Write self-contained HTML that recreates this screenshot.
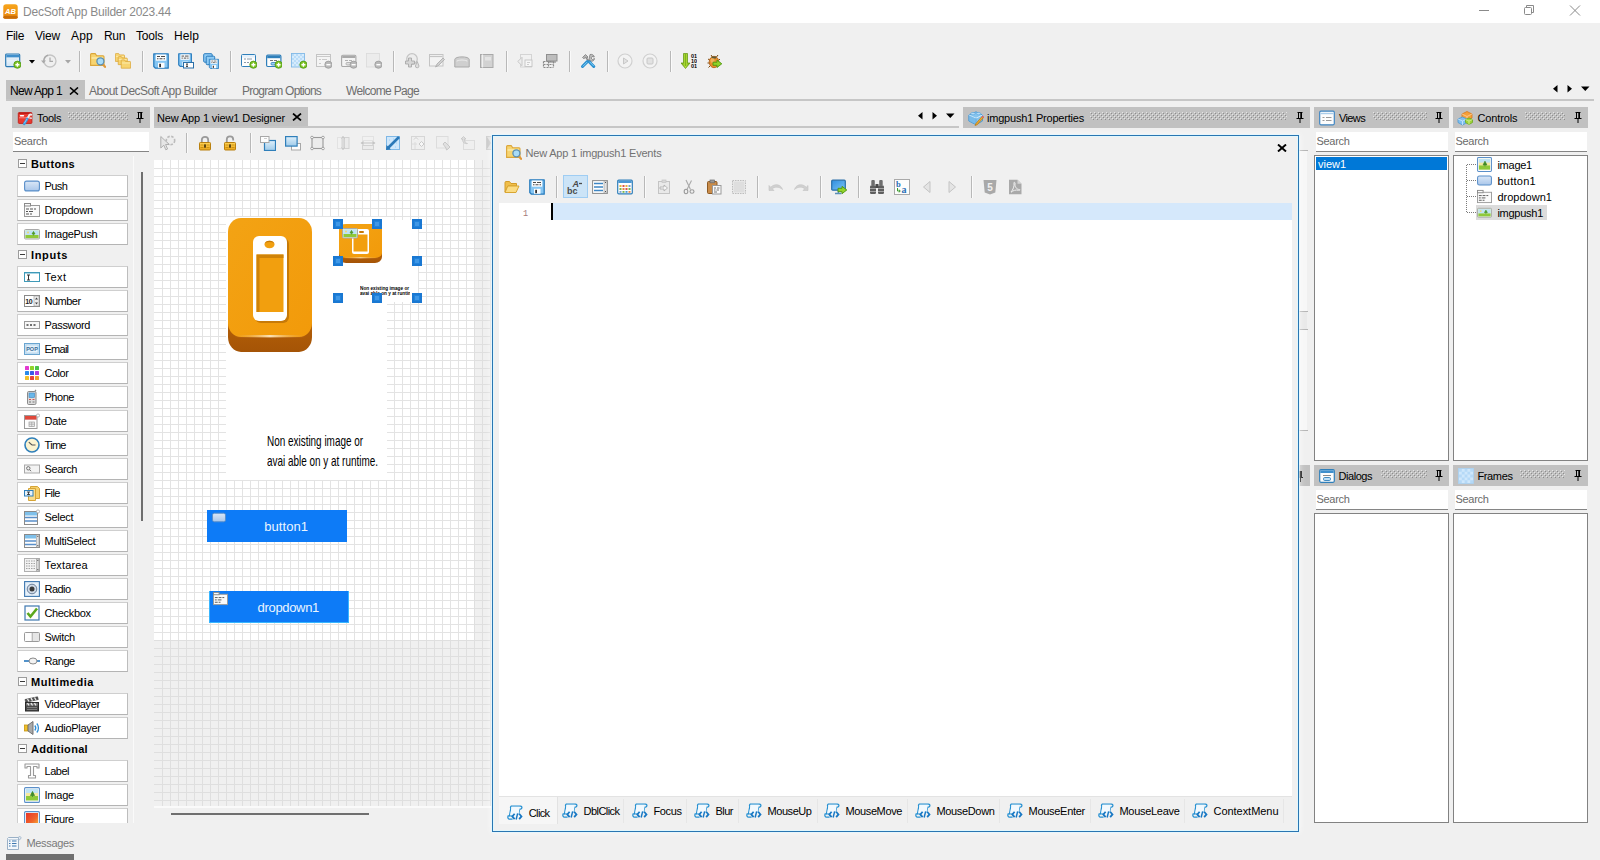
<!DOCTYPE html>
<html lang="en"><head><meta charset="utf-8"><title>DecSoft App Builder 2023.44</title>
<style>
html,body{margin:0;padding:0}
body{width:1600px;height:860px;overflow:hidden;background:#f0f0f0;position:relative;font-family:"Liberation Sans",sans-serif;}
#r{position:absolute;left:0;top:0;width:1600px;height:860px;overflow:hidden}
#r div,#r span.t,#r svg.i{position:absolute}
#r div{box-sizing:border-box}
span.t{white-space:pre}
</style></head>
<body><div id="r">
<svg width="0" height="0" style="position:absolute"><defs><linearGradient id="apg" x1="0" y1="0" x2="0" y2="1"><stop offset="0" stop-color="#f7a51c"/><stop offset="1" stop-color="#e8860c"/></linearGradient><linearGradient id="nag" x1="0" y1="0" x2="0" y2="1"><stop offset="0" stop-color="#fff"/><stop offset="1" stop-color="#cfe4f5"/></linearGradient><linearGradient id="dlg" x1="0" y1="0" x2="1" y2="0"><stop offset="0" stop-color="#6aa80f"/><stop offset=".5" stop-color="#b7e23a"/><stop offset="1" stop-color="#6aa80f"/></linearGradient><linearGradient id="pbg" x1="0" y1="0" x2="0" y2="1"><stop offset="0" stop-color="#dbe8f7"/><stop offset="1" stop-color="#a9c6ea"/></linearGradient><linearGradient id="fgg" x1="0" y1="0" x2="1" y2="1"><stop offset="0" stop-color="#e8352a"/><stop offset=".6" stop-color="#f0642a"/><stop offset="1" stop-color="#f5b03a"/></linearGradient><linearGradient id="lkg" x1="0" y1="0" x2="0" y2="1"><stop offset="0" stop-color="#ffd55a"/><stop offset="1" stop-color="#e9a318"/></linearGradient><linearGradient id="sqb" x1="0" y1="0" x2="0" y2="1"><stop offset="0" stop-color="#dff0fb"/><stop offset="1" stop-color="#9fcbea"/></linearGradient><linearGradient id="mng" x1="0" y1="0" x2="1" y2="1"><stop offset="0" stop-color="#2f8ee0"/><stop offset="1" stop-color="#7cc4f4"/></linearGradient></defs></svg>
<div style="left:0px;top:0px;width:1600px;height:23px;background:#fff"></div>
<svg class="i" style="left:3px;top:4px;" width="15" height="15" viewBox="0 0 16 16"><rect x=".3" y=".3" width="15.400" height="15.400" rx="3" fill="url(#apg)"/><rect x=".3" y="12.500" width="15.400" height="3.200" rx="2" fill="#c96d08"/><text x="8" y="10.800" font-size="8" font-weight="bold" font-style="italic" text-anchor="middle" fill="#fff" font-family="Liberation Sans, sans-serif">AB</text></svg>
<span class="t" style="left:23px;top:5.84px;font-size:12px;line-height:12px;color:#8a8a8a;letter-spacing:-0.227px;">DecSoft App Builder 2023.44</span>
<svg class="i" style="left:1470px;top:0" width="130" height="23" viewBox="0 0 130 23"><g stroke="#8a8a8a" stroke-width="1" fill="none"><path d="M9 10.5H19"/><rect x="54.5" y="7.5" width="7" height="7" rx="1"/><path d="M56.5 7.5V5.5H63.5V12.5H61.5"/><path d="M100 5.5L110 15.5M110 5.5L100 15.5"/></g></svg>
<span class="t" style="left:6px;top:29.84px;font-size:12px;line-height:12px;color:#000;letter-spacing:-0.334px;">File</span>
<span class="t" style="left:35px;top:29.84px;font-size:12px;line-height:12px;color:#000;letter-spacing:-0.199px;">View</span>
<span class="t" style="left:71px;top:29.84px;font-size:12px;line-height:12px;color:#000;letter-spacing:0.216px;">App</span>
<span class="t" style="left:104px;top:29.84px;font-size:12px;line-height:12px;color:#000;letter-spacing:-0.338px;">Run</span>
<span class="t" style="left:136px;top:29.84px;font-size:12px;line-height:12px;color:#000;letter-spacing:-0.203px;">Tools</span>
<span class="t" style="left:174px;top:29.84px;font-size:12px;line-height:12px;color:#000;letter-spacing:0.080px;">Help</span>
<svg class="i" style="left:5px;top:53px;" width="16" height="16" viewBox="0 0 16 16"><rect x=".7" y="1" width="14" height="12.600" rx="1" fill="url(#nag)" stroke="#2c7ab3" stroke-width="1.200"/><rect x="1.300" y="1.600" width="12.800" height="2.800" fill="#3f8fcc"/><path d="M1.500 6H14" stroke="#c9dceb" stroke-width=".7"/><circle cx="12.4" cy="11.7" r="3.6" fill="#7ec225" stroke="#4e9a12" stroke-width=".8"/><path d="M10.4 11.7H14.4M12.4 9.7V13.7" stroke="#fff" stroke-width="1.4"/></svg>
<svg class="i" style="left:41px;top:53px;" width="16" height="16" viewBox="0 0 16 16"><circle cx="9" cy="8" r="6" fill="#efefef" stroke="#c4c4c4" stroke-width="1.300"/><path d="M9 4.500V8.300H12" stroke="#a9a9a9" stroke-width="1.200" fill="none"/><path d="M0 7.500L2.500 10.500L5 7.500Z" fill="#a9a9a9"/><path d="M2.700 8A6.300 6.300 0 0 1 7 2.200" stroke="#a9a9a9" stroke-width="1.300" fill="none"/></svg>
<svg class="i" style="left:90px;top:53px;" width="16" height="16" viewBox="0 0 16 16"><g transform="translate(0 0) scale(1.0)"><path d="M.600 1.600C.600 1 1 .600 1.600 .600H5.200L6.700 2.800H13C13.600 2.800 14 3.200 14 3.800V12.400H.600Z" fill="#f7d470" stroke="#dba63a" stroke-width="1.100" stroke-linejoin="round"/><path d="M1.500 5H13.200" stroke="#fceeb5" stroke-width="1.200"/></g><path d="M12.600 11L15 13.800" stroke="#e09a3a" stroke-width="2.200" stroke-linecap="round"/><circle cx="10.400" cy="8.300" r="3.500" fill="#a9dcf7" stroke="#5b8fb3" stroke-width="1.300"/></svg>
<svg class="i" style="left:115px;top:53px;" width="16" height="16" viewBox="0 0 16 16"><g transform="translate(0 0) scale(0.68)"><path d="M.600 1.600C.600 1 1 .600 1.600 .600H5.200L6.700 2.800H13C13.600 2.800 14 3.200 14 3.800V12.400H.600Z" fill="#f7d470" stroke="#dba63a" stroke-width="1.100" stroke-linejoin="round"/><path d="M1.500 5H13.200" stroke="#fceeb5" stroke-width="1.200"/></g><g transform="translate(2.8 3.2) scale(0.68)"><path d="M.600 1.600C.600 1 1 .600 1.600 .600H5.200L6.700 2.800H13C13.600 2.800 14 3.200 14 3.800V12.400H.600Z" fill="#f7d470" stroke="#dba63a" stroke-width="1.100" stroke-linejoin="round"/><path d="M1.500 5H13.200" stroke="#fceeb5" stroke-width="1.200"/></g><g transform="translate(5.8 6.5) scale(0.7)"><path d="M.600 1.600C.600 1 1 .600 1.600 .600H5.200L6.700 2.800H13C13.600 2.800 14 3.200 14 3.800V12.400H.600Z" fill="#f7d470" stroke="#dba63a" stroke-width="1.100" stroke-linejoin="round"/><path d="M1.500 5H13.200" stroke="#fceeb5" stroke-width="1.200"/></g></svg>
<svg class="i" style="left:153px;top:53px;" width="16" height="16" viewBox="0 0 16 16"><g transform="translate(0 0) scale(1.0)"><path d="M.8 .8H15.200V15.200H2.500L.8 13.500Z" fill="#86c6f3" stroke="#2a7cbd" stroke-width="1.300" stroke-linejoin="round"/><rect x="2.800" y="1.500" width="10.400" height="6.200" fill="#fdfdfd"/><path d="M4 3.500H7M8 3.500H12M4 5.800H5.500M6.500 5.800H9.500M10.500 5.800H12" stroke="#4a4a4a" stroke-width="1.100"/><rect x="5" y="9.800" width="6.500" height="5" fill="#fdfdfd"/><rect x="6.200" y="10.800" width="1.800" height="3.400" fill="#333"/></g></svg>
<svg class="i" style="left:178px;top:53px;" width="16" height="16" viewBox="0 0 16 16"><g transform="translate(0 0) scale(0.88)"><path d="M.8 .8H15.200V15.200H2.500L.8 13.500Z" fill="#86c6f3" stroke="#2a7cbd" stroke-width="1.300" stroke-linejoin="round"/><rect x="2.800" y="1.500" width="10.400" height="6.200" fill="#fdfdfd"/><path d="M4 3.500H7M8 3.500H12M4 5.800H5.500M6.500 5.800H9.500M10.500 5.800H12" stroke="#4a4a4a" stroke-width="1.100"/><rect x="5" y="9.800" width="6.500" height="5" fill="#fdfdfd"/><rect x="6.200" y="10.800" width="1.800" height="3.400" fill="#333"/></g><rect x="5.500" y="9.500" width="10" height="5.500" fill="#fdfdfd" stroke="#2a6fa8"/><path d="M8 11H10M9 11V13.500M8 13.500H10" stroke="#222" stroke-width=".8"/></svg>
<svg class="i" style="left:203px;top:53px;" width="16" height="16" viewBox="0 0 16 16"><rect x=".7" y=".7" width="8.500" height="8.500" rx="1" fill="#8ecbf5" stroke="#2a7cbd"/><rect x="3.200" y="3.200" width="8.500" height="8.500" rx="1" fill="#8ecbf5" stroke="#2a7cbd"/><g transform="translate(5.8 5.8) scale(0.64)"><path d="M.8 .8H15.200V15.200H2.500L.8 13.500Z" fill="#86c6f3" stroke="#2a7cbd" stroke-width="1.300" stroke-linejoin="round"/><rect x="2.800" y="1.500" width="10.400" height="6.200" fill="#fdfdfd"/><path d="M4 3.500H7M8 3.500H12M4 5.800H5.500M6.500 5.800H9.500M10.500 5.800H12" stroke="#4a4a4a" stroke-width="1.100"/><rect x="5" y="9.800" width="6.500" height="5" fill="#fdfdfd"/><rect x="6.200" y="10.800" width="1.800" height="3.400" fill="#333"/></g></svg>
<svg class="i" style="left:241px;top:53px;" width="16" height="16" viewBox="0 0 16 16"><rect x=".5" y="1.5" width="14" height="12" rx="1" fill="#fdfdfd" stroke="#2f7fba"/><rect x="1" y="2" width="13" height="2.500" fill="#e4f0fa"/><path d="M3 6H5M6 6H11M3 9.500H5M6 9.500H8" stroke="#8a9aaa" stroke-width="1"/><circle cx="12.4" cy="11.7" r="3.6" fill="#7ec225" stroke="#4e9a12" stroke-width=".8"/><path d="M10.4 11.7H14.4M12.4 9.7V13.7" stroke="#fff" stroke-width="1.4"/></svg>
<svg class="i" style="left:266px;top:53px;" width="16" height="16" viewBox="0 0 16 16"><rect x=".6" y="2.200" width="14.300" height="11.300" rx="1.200" fill="#fdfdfd" stroke="#2f7fba" stroke-width="1.200"/><rect x="1.200" y="2.800" width="13.100" height="2.400" fill="#2f7fba"/><path d="M4 7.500H7M8 7.500H11" stroke="#666" stroke-width=".9"/><rect x="5" y="9.500" width="6" height="2.500" rx="1" fill="#9fd0f5" stroke="#2f7fba" stroke-width=".8"/><circle cx="12.6" cy="11.7" r="3.6" fill="#7ec225" stroke="#4e9a12" stroke-width=".8"/><path d="M10.6 11.7H14.6M12.6 9.7V13.7" stroke="#fff" stroke-width="1.4"/></svg>
<svg class="i" style="left:291px;top:53px;" width="16" height="16" viewBox="0 0 16 16"><rect x=".5" y=".5" width="13" height="13.500" fill="#d6ebfc" stroke="#7fb8e6" stroke-width=".9"/><path d="M1 1h2v2h-2zM5 1h2v2h-2zM9 1h2v2h-2zM3 3h2v2h-2zM7 3h2v2h-2zM11 3h2v2h-2zM1 5h2v2h-2zM5 5h2v2h-2zM9 5h2v2h-2zM3 7h2v2h-2zM7 7h2v2h-2zM11 7h2v2h-2zM1 9h2v2h-2zM5 9h2v2h-2zM9 9h2v2h-2zM3 11h2v2h-2zM7 11h2v2h-2zM11 11h2v2h-2z" fill="#b9dcf8"/><circle cx="12.4" cy="11.7" r="3.6" fill="#7ec225" stroke="#4e9a12" stroke-width=".8"/><path d="M10.4 11.7H14.4M12.4 9.7V13.7" stroke="#fff" stroke-width="1.4"/></svg>
<svg class="i" style="left:316px;top:53px;" width="16" height="16" viewBox="0 0 16 16"><rect x=".5" y="1.500" width="14" height="12" fill="#f4f4f4" stroke="#c4c4c4"/><path d="M1 3.500H14M3 6.500H5M6 6.500H11M3 10.500H5" stroke="#c4c4c4" stroke-width=".9"/><circle cx="12.4" cy="11.7" r="3.6" fill="#b9b9b9" stroke="#9a9a9a" stroke-width=".8"/><path d="M10.4 11.7H14.4" stroke="#fff" stroke-width="1.4"/></svg>
<svg class="i" style="left:341px;top:53px;" width="16" height="16" viewBox="0 0 16 16"><rect x=".6" y="2.200" width="14.300" height="11.300" rx="1.200" fill="#f4f4f4" stroke="#a9a9a9" stroke-width="1.100"/><rect x="1.200" y="2.800" width="13.100" height="2.200" fill="#a9a9a9"/><path d="M4 7.500H7M8 7.500H11" stroke="#a9a9a9" stroke-width=".9"/><rect x="5" y="9.500" width="6" height="2.500" rx="1" fill="#e0e0e0" stroke="#a9a9a9" stroke-width=".8"/><circle cx="12.6" cy="11.7" r="3.6" fill="#b9b9b9" stroke="#9a9a9a" stroke-width=".8"/><path d="M10.6 11.7H14.6" stroke="#fff" stroke-width="1.4"/></svg>
<svg class="i" style="left:366px;top:53px;" width="16" height="16" viewBox="0 0 16 16"><rect x=".5" y=".5" width="13" height="13.500" fill="#ececec" stroke="#dadada" stroke-width=".8"/><circle cx="12.4" cy="11.7" r="3.6" fill="#b9b9b9" stroke="#9a9a9a" stroke-width=".8"/><path d="M10.4 11.7H14.4" stroke="#fff" stroke-width="1.4"/></svg>
<svg class="i" style="left:404px;top:53px;" width="16" height="16" viewBox="0 0 16 16"><circle cx="8" cy="6" r="5.300" fill="#ededed" stroke="#c4c4c4" stroke-width="1.200"/><path d="M4.500 5V8H1.500V11H4.500V14H7.500V11H10.500V8H7.500V5Z" fill="#d6d6d6" stroke="#a9a9a9" stroke-width=".9"/><path d="M13.200 8.500L15 13A1.800 1.800 0 0 1 11.400 13Z" fill="#e0e0e0" stroke="#a9a9a9" stroke-width=".8"/></svg>
<svg class="i" style="left:429px;top:53px;" width="16" height="16" viewBox="0 0 16 16"><rect x=".5" y="1.500" width="13.500" height="11.500" fill="#f3f3f3" stroke="#c4c4c4"/><path d="M1 3.500H13.500" stroke="#c4c4c4" stroke-width="1.200"/><path d="M6.500 14L8 11L14 5L15.500 6.500L9.500 12.500Z" fill="#d0d0d0" stroke="#a9a9a9" stroke-width=".8"/></svg>
<svg class="i" style="left:454px;top:53px;" width="16" height="16" viewBox="0 0 16 16"><path d="M.8 14V6.500C.8 3 15.200 3 15.200 6.500V14Z" fill="#cfcfcf" stroke="#a9a9a9" stroke-width="1"/><path d="M3 8.500C3 6.500 13 6.500 13 8.500" stroke="#eaeaea" stroke-width="1.200" fill="none"/></svg>
<svg class="i" style="left:479px;top:53px;" width="16" height="16" viewBox="0 0 16 16"><rect x="1.500" y="1.500" width="12.500" height="13" fill="#d2d2d2" stroke="#a9a9a9"/><path d="M3.500 1.500V14.500" stroke="#f0f0f0" stroke-width="1.200"/><rect x="6" y="4" width="6" height="3.500" fill="#e4e4e4"/></svg>
<svg class="i" style="left:517px;top:53px;" width="16" height="16" viewBox="0 0 16 16"><rect x="3.500" y="1.500" width="11" height="12.500" fill="#f1f1f1" stroke="#d4d4d4"/><path d="M.8 8.500L5 4.300V12.700Z" fill="#ededed" stroke="#c4c4c4" stroke-width=".9"/><rect x="8" y="7" width="7" height="6.500" fill="#f6f6f6" stroke="#c4c4c4" stroke-width=".9"/><path d="M10 9.500H13M10 11.500H12" stroke="#c4c4c4" stroke-width=".8"/></svg>
<svg class="i" style="left:542px;top:53px;" width="16" height="16" viewBox="0 0 16 16"><rect x="4.500" y="1.500" width="10.500" height="6.500" fill="#bdbdbd" stroke="#8f8f8f"/><path d="M6 9H14" stroke="#8f8f8f" stroke-width="1.200"/><g stroke="#8a8a8a" stroke-width="1.200" fill="none" stroke-dasharray="2 1"><path d="M1.500 8.500H11.500M1.500 11.500H11.500M1.500 14.500H11.500M1.500 8.500V14.500M6.500 8.500V14.500M11.500 8.500V14.500"/></g></svg>
<svg class="i" style="left:580px;top:53px;" width="16" height="16" viewBox="0 0 16 16"><path d="M2.500 4.500L5.500 1.500L8 4L6.800 5.200L5.800 4.200L5 5L3.500 5.500Z" fill="#b5b5b5" stroke="#7d7d7d" stroke-width=".8"/><path d="M10 1.500C12 1 14 2 14.300 4L12 3.500L11 5L12.500 6.500L14.500 5.500C14.500 7.500 12.500 8.800 10.500 8L9 6.500Z" fill="#bdbdbd" stroke="#7d7d7d" stroke-width=".8"/><path d="M6 5L10.500 9.500" stroke="#8a8a8a" stroke-width="1.600"/><path d="M9.800 6.800L7.500 9" stroke="#8a8a8a" stroke-width="1.600"/><path d="M7.300 8.600L2.500 13.500" stroke="#2a8fd0" stroke-width="3" stroke-linecap="round"/><path d="M9.200 8.800L13.800 13.500" stroke="#2a8fd0" stroke-width="3" stroke-linecap="round"/><path d="M7 9.200L3 13.200" stroke="#7fd0f5" stroke-width="1" stroke-linecap="round"/><path d="M9.800 9L13.500 12.800" stroke="#7fd0f5" stroke-width="1" stroke-linecap="round"/></svg>
<svg class="i" style="left:617px;top:53px;" width="16" height="16" viewBox="0 0 16 16"><circle cx="8" cy="8" r="7" fill="#f3f3f3" stroke="#d0d0d0" stroke-width="1.200"/><path d="M6.500 5V11L11 8Z" fill="#e2e2e2" stroke="#c4c4c4" stroke-width=".9"/></svg>
<svg class="i" style="left:642px;top:53px;" width="16" height="16" viewBox="0 0 16 16"><circle cx="8" cy="8" r="7" fill="#f3f3f3" stroke="#d0d0d0" stroke-width="1.200"/><rect x="5" y="5" width="6" height="6" rx="1" fill="#e2e2e2" stroke="#c4c4c4" stroke-width=".9"/></svg>
<svg class="i" style="left:681px;top:53px;" width="16" height="16" viewBox="0 0 16 16"><path d="M2.500 .5H6.500V10H9L4.500 15.500L0 10H2.500Z" fill="url(#dlg)" stroke="#5c940c" stroke-width=".7"/><path d="M4.500 1V13" stroke="#5c940c" stroke-width=".6"/><g font-family="Liberation Sans, sans-serif" font-size="5.500" font-weight="bold" fill="#000"><text x="10" y="4.800">01</text><text x="10" y="9.800">10</text><text x="10" y="14.800">01</text></g></svg>
<svg class="i" style="left:706px;top:53px;" width="16" height="16" viewBox="0 0 16 16"><path d="M5 2L6.500 4M12 2L10.500 4M2 6L4.500 7.500M1.500 10H4M2.500 14.500L4.500 12.500M14 6L12.500 7.500" stroke="#7a4a10" stroke-width="1"/><ellipse cx="8" cy="9" rx="4.800" ry="5.700" fill="#e8902a" stroke="#b4631a" stroke-width=".9"/><path d="M5.500 3.500H10.500L10 5.500H6Z" fill="#5a5a3a"/><ellipse cx="6.500" cy="7.500" rx="2" ry="2.500" fill="#f5c070" opacity=".7"/><path d="M7 9.200H11V7L15.800 10.800L11 14.500V12.300H7Z" fill="#8fd32a" stroke="#4f9510" stroke-width=".9" stroke-linejoin="round"/></svg>
<div style="left:79px;top:51px;width:1px;height:21px;background:#b8b8b8"></div>
<div style="left:80px;top:51px;width:1px;height:21px;background:#fafafa"></div>
<div style="left:142px;top:51px;width:1px;height:21px;background:#b8b8b8"></div>
<div style="left:143px;top:51px;width:1px;height:21px;background:#fafafa"></div>
<div style="left:230px;top:51px;width:1px;height:21px;background:#b8b8b8"></div>
<div style="left:231px;top:51px;width:1px;height:21px;background:#fafafa"></div>
<div style="left:393px;top:51px;width:1px;height:21px;background:#b8b8b8"></div>
<div style="left:394px;top:51px;width:1px;height:21px;background:#fafafa"></div>
<div style="left:506px;top:51px;width:1px;height:21px;background:#b8b8b8"></div>
<div style="left:507px;top:51px;width:1px;height:21px;background:#fafafa"></div>
<div style="left:569px;top:51px;width:1px;height:21px;background:#b8b8b8"></div>
<div style="left:570px;top:51px;width:1px;height:21px;background:#fafafa"></div>
<div style="left:607px;top:51px;width:1px;height:21px;background:#b8b8b8"></div>
<div style="left:608px;top:51px;width:1px;height:21px;background:#fafafa"></div>
<div style="left:670px;top:51px;width:1px;height:21px;background:#b8b8b8"></div>
<div style="left:671px;top:51px;width:1px;height:21px;background:#fafafa"></div>
<svg class="i" style="left:28.500px;top:60px" width="6" height="3.500" viewBox="0 0 6 3.500"><path d="M0 0H6L3 3.500Z" fill="#000"/></svg>
<svg class="i" style="left:64.500px;top:60px" width="6" height="3.500" viewBox="0 0 6 3.500"><path d="M0 0H6L3 3.500Z" fill="#a6a6a6"/></svg>
<div style="left:6px;top:80px;width:79px;height:21px;background:#c1c1c1"></div>
<span class="t" style="left:10px;top:84.84px;font-size:12px;line-height:12px;color:#000;letter-spacing:-0.671px;">New App 1</span>
<svg class="i" style="left:69.400px;top:86.700px" width="10" height="8" viewBox="0 0 10 8"><path d="M1 .5L9 7.500M9 .5L1 7.500" stroke="#000" stroke-width="1.600"/></svg>
<span class="t" style="left:89px;top:84.84px;font-size:12px;line-height:12px;color:#6e6e6e;letter-spacing:-0.564px;">About DecSoft App Builder</span>
<span class="t" style="left:242px;top:84.84px;font-size:12px;line-height:12px;color:#6e6e6e;letter-spacing:-0.780px;">Program Options</span>
<span class="t" style="left:346px;top:84.84px;font-size:12px;line-height:12px;color:#6e6e6e;letter-spacing:-0.680px;">Welcome Page</span>
<div style="left:6px;top:99px;width:1588px;height:2px;background:#c6c6c6"></div>
<svg class="i" style="left:1553px;top:85px" width="40" height="8" viewBox="0 0 40 8"><path d="M4.500 0V7.500L0 3.750Z M14.500 0V7.500L19 3.750Z M28 1.500H36.500L32.250 6Z" fill="#000"/></svg>
<svg width="0" height="0" style="position:absolute"><defs><pattern id="gp" width="4" height="4" patternUnits="userSpaceOnUse"><rect x="0" y="0" width="1" height="1" fill="#e4e4e4"/><rect x="2" y="2" width="1" height="1" fill="#e4e4e4"/><rect x="1" y="1" width="1" height="1" fill="#8e8e8e"/><rect x="3" y="3" width="1" height="1" fill="#8e8e8e"/></pattern></defs></svg>
<div style="left:12px;top:107px;width:138px;height:21px;background:#c1c1c1"></div>
<svg class="i" style="left:17px;top:110px;" width="16" height="16" viewBox="0 0 16 16"><rect x="1.300" y="2.600" width="13.600" height="10.800" rx=".8" fill="#ea3a30" stroke="#c2201a" stroke-width=".9"/><path d="M1.800 3.300H14.400" stroke="#b81a14" stroke-width="1.200"/><path d="M2 7.800H14.400" stroke="#ff8d84" stroke-width=".9"/><path d="M3.500 5.800H6.500" stroke="#fff" stroke-width="1.400" stroke-linecap="round"/><path d="M14.800 5.200C13.500 4 11.800 4.600 11.800 6.400L10 8.600" stroke="#ececec" stroke-width="2" fill="none"/><path d="M12.500 8.200H15" stroke="#e0e0e0" stroke-width="1.300"/><path d="M10.200 8.800L7.200 13.800" stroke="#3a9be0" stroke-width="2.600" stroke-linecap="round"/><path d="M9.800 9.300L7.500 13" stroke="#9fd6f7" stroke-width=".8" stroke-linecap="round"/></svg>
<span class="t" style="left:37px;top:112.69px;font-size:11px;line-height:11px;color:#000;letter-spacing:-0.296px;">Tools</span>
<svg class="i" style="left:68px;top:112px" width="60" height="8" viewBox="0 0 60 8"><rect width="60" height="8" fill="url(#gp)"/></svg>
<svg class="i" style="left:136px;top:112px" width="8" height="11" viewBox="0 0 8 11"><path d="M1.5 0.5H6.5M2.5 0.5V6M5.5 0.5V6M4.8 0.5V6M0.5 6.5H7.5M4 6.5V11" stroke="#000" stroke-width="1" fill="none"/></svg>
<div style="left:13px;top:132px;width:136px;height:20px;background:#fff;border-bottom:1px solid #858585"></div>
<span class="t" style="left:14px;top:135.69px;font-size:11px;line-height:11px;color:#6a6a6a;letter-spacing:-0.309px;">Search</span>
<div style="left:133px;top:156px;width:1px;height:667px;background:#fafafa"></div>
<svg class="i" style="left:18px;top:159px" width="9" height="9" viewBox="0 0 9 9"><rect x=".5" y=".5" width="8" height="8" fill="#fdfdfd" stroke="#9c9c9c"/><path d="M2 4.5H7" stroke="#3a3a3a"/></svg>
<span class="t" style="left:31px;top:158.69px;font-size:11px;line-height:11px;color:#000;letter-spacing:0.350px;font-weight:bold;">Buttons</span>
<div style="left:17px;top:175px;width:111px;height:22px;background:#fff;border:1px solid #cfcfcf;border-bottom-color:#b4b4b4;border-right-color:#bdbdbd"></div>
<svg class="i" style="left:24px;top:178px;" width="16" height="16" viewBox="0 0 16 16"><rect x=".6" y="3.100" width="14.800" height="9.800" rx="2" fill="url(#pbg)" stroke="#5a8fc9" stroke-width="1.100"/></svg>
<span class="t" style="left:44.5px;top:180.69px;font-size:11px;line-height:11px;color:#000;letter-spacing:-0.593px;">Push</span>
<div style="left:17px;top:199px;width:111px;height:22px;background:#fff;border:1px solid #cfcfcf;border-bottom-color:#b4b4b4;border-right-color:#bdbdbd"></div>
<svg class="i" style="left:24px;top:202px;" width="16" height="16" viewBox="0 0 16 16"><rect x=".5" y="3.500" width="15" height="11" fill="#fafafa" stroke="#9a9a9a"/><rect x=".5" y="1.500" width="6" height="2.500" fill="#fafafa" stroke="#8a8a8a"/><path d="M2 7H5M6 7H9M10 7H12M2 9.500H4M5 9.500H9M2 12H5M6 12H8" stroke="#555" stroke-width="1"/></svg>
<span class="t" style="left:44.5px;top:204.69px;font-size:11px;line-height:11px;color:#000;letter-spacing:-0.218px;">Dropdown</span>
<div style="left:17px;top:223px;width:111px;height:22px;background:#fff;border:1px solid #cfcfcf;border-bottom-color:#b4b4b4;border-right-color:#bdbdbd"></div>
<svg class="i" style="left:24px;top:226px;" width="16" height="16" viewBox="0 0 16 16"><rect x=".5" y="3.500" width="15" height="9.500" rx="1" fill="#dff0d0" stroke="#a9a9a9"/><rect x="1.500" y="4.500" width="13" height="4.500" fill="#bfe3f5"/><rect x="1.500" y="9" width="13" height="3" fill="#8fc93a"/><path d="M9.500 9.500V7M8 8L9.500 5.500L11 8Z" fill="#4f9a2a" stroke="#4f9a2a" stroke-width=".8"/><circle cx="4" cy="6.500" r="1" fill="#f5d76e"/></svg>
<span class="t" style="left:44.5px;top:228.69px;font-size:11px;line-height:11px;color:#000;letter-spacing:-0.305px;">ImagePush</span>
<svg class="i" style="left:18px;top:250px" width="9" height="9" viewBox="0 0 9 9"><rect x=".5" y=".5" width="8" height="8" fill="#fdfdfd" stroke="#9c9c9c"/><path d="M2 4.5H7" stroke="#3a3a3a"/></svg>
<span class="t" style="left:31px;top:249.69px;font-size:11px;line-height:11px;color:#000;letter-spacing:0.667px;font-weight:bold;">Inputs</span>
<div style="left:17px;top:266px;width:111px;height:22px;background:#fff;border:1px solid #cfcfcf;border-bottom-color:#b4b4b4;border-right-color:#bdbdbd"></div>
<svg class="i" style="left:24px;top:269px;" width="16" height="16" viewBox="0 0 16 16"><rect x=".5" y="3.500" width="15" height="9" fill="#fff" stroke="#3f9ab8" stroke-width="1"/><path d="M1 4.500H15" stroke="#a9d6e6"/><path d="M3 6H6M4.500 6V11M3 11H6" stroke="#333" stroke-width="1"/></svg>
<span class="t" style="left:44.5px;top:271.69px;font-size:11px;line-height:11px;color:#000;letter-spacing:0.456px;">Text</span>
<div style="left:17px;top:290px;width:111px;height:22px;background:#fff;border:1px solid #cfcfcf;border-bottom-color:#b4b4b4;border-right-color:#bdbdbd"></div>
<svg class="i" style="left:24px;top:293px;" width="16" height="16" viewBox="0 0 16 16"><rect x=".5" y="2.500" width="15" height="11" fill="#fff" stroke="#8a8a8a"/><text x="1.200" y="11" font-size="7" font-weight="bold" fill="#222" font-family="Liberation Sans, sans-serif" letter-spacing="-.4">10</text><rect x="10" y="3" width="5" height="10" fill="#eee" stroke="#9a9a9a" stroke-width=".6"/><path d="M11 6.500L12.500 4.500L14 6.500ZM11 9.500L12.500 11.500L14 9.500Z" fill="#444"/></svg>
<span class="t" style="left:44.5px;top:295.69px;font-size:11px;line-height:11px;color:#000;letter-spacing:-0.504px;">Number</span>
<div style="left:17px;top:314px;width:111px;height:22px;background:#fff;border:1px solid #cfcfcf;border-bottom-color:#b4b4b4;border-right-color:#bdbdbd"></div>
<svg class="i" style="left:24px;top:317px;" width="16" height="16" viewBox="0 0 16 16"><rect x=".5" y="4.500" width="15" height="7" fill="#f7f7f7" stroke="#9a9a9a"/><path d="M2.500 8H4.500M6 8H8M9.500 8H11.500" stroke="#444" stroke-width="1.600"/></svg>
<span class="t" style="left:44.5px;top:319.69px;font-size:11px;line-height:11px;color:#000;letter-spacing:-0.350px;">Password</span>
<div style="left:17px;top:338px;width:111px;height:22px;background:#fff;border:1px solid #cfcfcf;border-bottom-color:#b4b4b4;border-right-color:#bdbdbd"></div>
<svg class="i" style="left:24px;top:341px;" width="16" height="16" viewBox="0 0 16 16"><rect x=".5" y="2.500" width="15" height="11" fill="#cfe6f7" stroke="#6aa5d0"/><rect x="2" y="4" width="12" height="8" fill="#e6f2fb" stroke="#9fc6e3" stroke-width=".6"/><text x="8" y="10.300" font-size="5.500" font-weight="bold" text-anchor="middle" fill="#3a6a95" font-family="Liberation Sans, sans-serif">POP</text></svg>
<span class="t" style="left:44.5px;top:343.69px;font-size:11px;line-height:11px;color:#000;letter-spacing:-0.741px;">Email</span>
<div style="left:17px;top:362px;width:111px;height:22px;background:#fff;border:1px solid #cfcfcf;border-bottom-color:#b4b4b4;border-right-color:#bdbdbd"></div>
<svg class="i" style="left:24px;top:365px;" width="16" height="16" viewBox="0 0 16 16"><g><rect x="1" y="1" width="4" height="4" rx=".6" fill="#e23ad0"/><rect x="6" y="1" width="4" height="4" rx=".6" fill="#8fd32a"/><rect x="11" y="1" width="4" height="4" rx=".6" fill="#4ac24a"/><rect x="1" y="6" width="4" height="4" rx=".6" fill="#2a8ae8"/><rect x="6" y="6" width="4" height="4" rx=".6" fill="#3a5ae8"/><rect x="11" y="6" width="4" height="4" rx=".6" fill="#b03ae0"/><rect x="1" y="11" width="4" height="4" rx=".6" fill="#f0c02a"/><rect x="6" y="11" width="4" height="4" rx=".6" fill="#e8443a"/><rect x="11" y="11" width="4" height="4" rx=".6" fill="#f0a02a"/></g></svg>
<span class="t" style="left:44.5px;top:367.69px;font-size:11px;line-height:11px;color:#000;letter-spacing:-0.497px;">Color</span>
<div style="left:17px;top:386px;width:111px;height:22px;background:#fff;border:1px solid #cfcfcf;border-bottom-color:#b4b4b4;border-right-color:#bdbdbd"></div>
<svg class="i" style="left:24px;top:389px;" width="16" height="16" viewBox="0 0 16 16"><path d="M10 3.500L12 .8" stroke="#888" stroke-width="1.200"/><rect x="3.500" y="2.500" width="8.500" height="13" rx="1.200" fill="#dcdcdc" stroke="#8a8a8a"/><rect x="5" y="4" width="5.500" height="4.500" fill="#6ab8ea" stroke="#3f86c4" stroke-width=".6"/><path d="M5 10.500H7M8.500 10.500H10.500" stroke="#d9534f" stroke-width="1.200"/><path d="M5 13H7M8.500 13H10.500" stroke="#777" stroke-width="1.200"/></svg>
<span class="t" style="left:44.5px;top:391.69px;font-size:11px;line-height:11px;color:#000;letter-spacing:-0.482px;">Phone</span>
<div style="left:17px;top:410px;width:111px;height:22px;background:#fff;border:1px solid #cfcfcf;border-bottom-color:#b4b4b4;border-right-color:#bdbdbd"></div>
<svg class="i" style="left:24px;top:413px;" width="16" height="16" viewBox="0 0 16 16"><rect x=".5" y="2.500" width="12.500" height="13" fill="#fdfdfd" stroke="#9a9a9a"/><rect x="1" y="3" width="11.500" height="3" fill="#e0483a"/><path d="M1 6.500H12.500" stroke="#c33" stroke-width=".6"/><rect x="5" y="9" width="5.500" height="4.500" fill="#e9e9e9" stroke="#9a9a9a" stroke-width=".7"/><path d="M5 11.200H10.500M7.700 9V13.500" stroke="#9a9a9a" stroke-width=".6"/><circle cx="14" cy="2.500" r="1.600" fill="#fff" stroke="#9a9a9a" stroke-width=".7"/></svg>
<span class="t" style="left:44.5px;top:415.69px;font-size:11px;line-height:11px;color:#000;letter-spacing:-0.309px;">Date</span>
<div style="left:17px;top:434px;width:111px;height:22px;background:#fff;border:1px solid #cfcfcf;border-bottom-color:#b4b4b4;border-right-color:#bdbdbd"></div>
<svg class="i" style="left:24px;top:437px;" width="16" height="16" viewBox="0 0 16 16"><circle cx="8" cy="8" r="7" fill="#fbf3d0" stroke="#2f7fba" stroke-width="1.600"/><path d="M8 8L4.800 5.200M8 8H11.500" stroke="#555" stroke-width="1.100" fill="none"/></svg>
<span class="t" style="left:44.5px;top:439.69px;font-size:11px;line-height:11px;color:#000;letter-spacing:-0.684px;">Time</span>
<div style="left:17px;top:458px;width:111px;height:22px;background:#fff;border:1px solid #cfcfcf;border-bottom-color:#b4b4b4;border-right-color:#bdbdbd"></div>
<svg class="i" style="left:24px;top:461px;" width="16" height="16" viewBox="0 0 16 16"><rect x=".5" y="4" width="15" height="8" fill="#f3f3f3" stroke="#a9a9a9"/><circle cx="4.300" cy="7.300" r="1.700" fill="none" stroke="#666" stroke-width=".9"/><path d="M5.500 8.600L7 10.200" stroke="#666" stroke-width="1"/></svg>
<span class="t" style="left:44.5px;top:463.69px;font-size:11px;line-height:11px;color:#000;letter-spacing:-0.392px;">Search</span>
<div style="left:17px;top:482px;width:111px;height:22px;background:#fff;border:1px solid #cfcfcf;border-bottom-color:#b4b4b4;border-right-color:#bdbdbd"></div>
<svg class="i" style="left:24px;top:485px;" width="16" height="16" viewBox="0 0 16 16"><path d="M6.500 1.500H13.500L15.500 3.500V13.500H6.500Z" fill="#f5cf6a" stroke="#d6a436"/><path d="M4.500 3.500H11.500V15.500H4.500Z" fill="#f8dc8c" stroke="#d6a436"/><rect x=".5" y="5.500" width="8.500" height="5.500" fill="#e6f2fb" stroke="#2f7fba"/><path d="M3 7H6M4.500 7V9.500M3 9.500H6" stroke="#222" stroke-width=".8"/></svg>
<span class="t" style="left:44.5px;top:487.69px;font-size:11px;line-height:11px;color:#000;letter-spacing:-0.606px;">File</span>
<div style="left:17px;top:506px;width:111px;height:22px;background:#fff;border:1px solid #cfcfcf;border-bottom-color:#b4b4b4;border-right-color:#bdbdbd"></div>
<svg class="i" style="left:24px;top:509px;" width="16" height="16" viewBox="0 0 16 16"><rect x=".5" y="2.500" width="13" height="13" fill="#fdfdfd" stroke="#8a8a8a"/><rect x="1" y="3" width="12" height="3.500" fill="#7fc0ea"/><path d="M1 8.500H13M1 12H13" stroke="#5a8fc9" stroke-width="1.600"/><circle cx="14" cy="2.500" r="1.600" fill="#fff" stroke="#9a9a9a" stroke-width=".7"/></svg>
<span class="t" style="left:44.5px;top:511.69px;font-size:11px;line-height:11px;color:#000;letter-spacing:-0.312px;">Select</span>
<div style="left:17px;top:530px;width:111px;height:22px;background:#fff;border:1px solid #cfcfcf;border-bottom-color:#b4b4b4;border-right-color:#bdbdbd"></div>
<svg class="i" style="left:24px;top:533px;" width="16" height="16" viewBox="0 0 16 16"><rect x=".5" y="1.500" width="15" height="13" fill="#fdfdfd" stroke="#8a8a8a"/><rect x="1" y="2" width="11" height="3.500" fill="#7fc0ea"/><path d="M1 8H12M1 11.500H12" stroke="#5a8fc9" stroke-width="1.600"/><rect x="12.500" y="2" width="2.500" height="12" fill="#e3e3e3" stroke="#9a9a9a" stroke-width=".6"/><rect x="13.300" y="3" width="1" height="1" fill="#555"/><rect x="13.300" y="12" width="1" height="1" fill="#555"/></svg>
<span class="t" style="left:44.5px;top:535.69px;font-size:11px;line-height:11px;color:#000;letter-spacing:-0.273px;">MultiSelect</span>
<div style="left:17px;top:554px;width:111px;height:22px;background:#fff;border:1px solid #cfcfcf;border-bottom-color:#b4b4b4;border-right-color:#bdbdbd"></div>
<svg class="i" style="left:24px;top:557px;" width="16" height="16" viewBox="0 0 16 16"><rect x=".5" y="1.500" width="15" height="13" fill="#f3f3f3" stroke="#b0b0b0"/><g stroke="#9a9a9a" stroke-width=".9" stroke-dasharray="1.500 1"><path d="M2 4H11M2 6.500H11M2 9H11M2 11.500H11"/></g><rect x="12.500" y="2" width="2.500" height="12" fill="#d9d9d9" stroke="#9a9a9a" stroke-width=".6"/><rect x="13.300" y="3" width="1" height="1" fill="#555"/><rect x="13.300" y="12" width="1" height="1" fill="#555"/></svg>
<span class="t" style="left:44.5px;top:559.69px;font-size:11px;line-height:11px;color:#000;letter-spacing:0.126px;">Textarea</span>
<div style="left:17px;top:578px;width:111px;height:22px;background:#fff;border:1px solid #cfcfcf;border-bottom-color:#b4b4b4;border-right-color:#bdbdbd"></div>
<svg class="i" style="left:24px;top:581px;" width="16" height="16" viewBox="0 0 16 16"><rect x=".6" y=".6" width="14.800" height="14.800" fill="#e6f0fa" stroke="#3f78b0" stroke-width="1.100"/><circle cx="8" cy="8" r="4.800" fill="#cfd9e6" stroke="#6a7f9a" stroke-width="1"/><circle cx="8" cy="8" r="2.500" fill="#3a3a3a"/></svg>
<span class="t" style="left:44.5px;top:583.69px;font-size:11px;line-height:11px;color:#000;letter-spacing:-0.548px;">Radio</span>
<div style="left:17px;top:602px;width:111px;height:22px;background:#fff;border:1px solid #cfcfcf;border-bottom-color:#b4b4b4;border-right-color:#bdbdbd"></div>
<svg class="i" style="left:24px;top:605px;" width="16" height="16" viewBox="0 0 16 16"><rect x="1" y="1" width="14" height="14" fill="#fdfdfd" stroke="#3f78b0" stroke-width="1.200"/><path d="M3.500 8L6.500 11.500L13 3.500" stroke="#5aa81e" stroke-width="2.600" fill="none"/></svg>
<span class="t" style="left:44.5px;top:607.69px;font-size:11px;line-height:11px;color:#000;letter-spacing:-0.352px;">Checkbox</span>
<div style="left:17px;top:626px;width:111px;height:22px;background:#fff;border:1px solid #cfcfcf;border-bottom-color:#b4b4b4;border-right-color:#bdbdbd"></div>
<svg class="i" style="left:24px;top:629px;" width="16" height="16" viewBox="0 0 16 16"><rect x=".5" y="3.500" width="15" height="9" rx="1" fill="#e6e6e6" stroke="#9a9a9a"/><rect x="1" y="4" width="7" height="8" fill="#fdfdfd"/><path d="M8.200 4V12" stroke="#9a9a9a" stroke-width=".8"/></svg>
<span class="t" style="left:44.5px;top:631.69px;font-size:11px;line-height:11px;color:#000;letter-spacing:-0.350px;">Switch</span>
<div style="left:17px;top:650px;width:111px;height:22px;background:#fff;border:1px solid #cfcfcf;border-bottom-color:#b4b4b4;border-right-color:#bdbdbd"></div>
<svg class="i" style="left:24px;top:653px;" width="16" height="16" viewBox="0 0 16 16"><path d="M0 8H16" stroke="#3f86c4" stroke-width="1.800"/><ellipse cx="9" cy="8" rx="4" ry="3" fill="#f3f3f3" stroke="#8a8a8a" stroke-width="1"/></svg>
<span class="t" style="left:44.5px;top:655.69px;font-size:11px;line-height:11px;color:#000;letter-spacing:-0.423px;">Range</span>
<svg class="i" style="left:18px;top:677px" width="9" height="9" viewBox="0 0 9 9"><rect x=".5" y=".5" width="8" height="8" fill="#fdfdfd" stroke="#9c9c9c"/><path d="M2 4.5H7" stroke="#3a3a3a"/></svg>
<span class="t" style="left:31px;top:676.69px;font-size:11px;line-height:11px;color:#000;letter-spacing:0.555px;font-weight:bold;">Multimedia</span>
<div style="left:17px;top:693px;width:111px;height:22px;background:#fff;border:1px solid #cfcfcf;border-bottom-color:#b4b4b4;border-right-color:#bdbdbd"></div>
<svg class="i" style="left:24px;top:696px;" width="16" height="16" viewBox="0 0 16 16"><path d="M1 3.500L13.500 .8L14.300 3.500L1.800 6.300Z" fill="#555" stroke="#333" stroke-width=".6"/><path d="M3.500 3L5 5.500M7 2.200L8.500 4.700M10.500 1.500L12 4" stroke="#eee" stroke-width="1.300"/><rect x="1.500" y="6.500" width="13" height="8.500" fill="#4a4a4a" stroke="#2a2a2a"/><rect x="2" y="7" width="12" height="2.500" fill="#777"/><path d="M3.500 7L5 9.500M7 7L8.500 9.500M10.500 7L12 9.500" stroke="#eee" stroke-width="1.300"/><path d="M3 11.500H13M3 13.500H13" stroke="#8a8a8a" stroke-width=".8"/></svg>
<span class="t" style="left:44.5px;top:698.69px;font-size:11px;line-height:11px;color:#000;letter-spacing:-0.347px;">VideoPlayer</span>
<div style="left:17px;top:717px;width:111px;height:22px;background:#fff;border:1px solid #cfcfcf;border-bottom-color:#b4b4b4;border-right-color:#bdbdbd"></div>
<svg class="i" style="left:24px;top:720px;" width="16" height="16" viewBox="0 0 16 16"><rect x=".5" y="5" width="3.500" height="6" fill="#f0c02a" stroke="#c8960f" stroke-width=".8"/><path d="M4 5L9 1.500V14.500L4 11Z" fill="#a9a9a9" stroke="#6a6a6a" stroke-width=".9"/><path d="M10.800 5.500C12 7 12 9 10.800 10.500M12.800 3.500C15 6 15 10 12.800 12.500" stroke="#2f8fd8" stroke-width="1.300" fill="none"/></svg>
<span class="t" style="left:44.5px;top:722.69px;font-size:11px;line-height:11px;color:#000;letter-spacing:-0.283px;">AudioPlayer</span>
<svg class="i" style="left:18px;top:744px" width="9" height="9" viewBox="0 0 9 9"><rect x=".5" y=".5" width="8" height="8" fill="#fdfdfd" stroke="#9c9c9c"/><path d="M2 4.5H7" stroke="#3a3a3a"/></svg>
<span class="t" style="left:31px;top:743.69px;font-size:11px;line-height:11px;color:#000;letter-spacing:0.323px;font-weight:bold;">Additional</span>
<div style="left:17px;top:760px;width:111px;height:22px;background:#fff;border:1px solid #cfcfcf;border-bottom-color:#b4b4b4;border-right-color:#bdbdbd"></div>
<svg class="i" style="left:24px;top:763px;" width="16" height="16" viewBox="0 0 16 16"><path d="M1 1H15V5H13V3.500H9.500V12.500H11.500V15H4.500V12.500H6.500V3.500H3V5H1Z" fill="#fdfdfd" stroke="#9a9a9a" stroke-width="1.100" stroke-linejoin="round"/></svg>
<span class="t" style="left:44.5px;top:765.69px;font-size:11px;line-height:11px;color:#000;letter-spacing:-0.483px;">Label</span>
<div style="left:17px;top:784px;width:111px;height:22px;background:#fff;border:1px solid #cfcfcf;border-bottom-color:#b4b4b4;border-right-color:#bdbdbd"></div>
<svg class="i" style="left:24px;top:787px;" width="16" height="16" viewBox="0 0 16 16"><rect x=".6" y=".6" width="14.800" height="14.800" rx="1" fill="#fdfdfd" stroke="#5a8fc9" stroke-width="1.100"/><rect x="2" y="2" width="12" height="7.500" fill="#f5e9a0"/><rect x="2" y="2" width="12" height="4" fill="#bfe3f5"/><rect x="2" y="9" width="12" height="4.500" fill="#8fc93a"/><path d="M8.500 10V8M6.500 8.500L8.500 4.500L10.500 8.500Z" fill="#3f8a2a" stroke="#3f8a2a" stroke-width=".8"/></svg>
<span class="t" style="left:44.5px;top:789.69px;font-size:11px;line-height:11px;color:#000;letter-spacing:-0.235px;">Image</span>
<div style="left:17px;top:808px;width:111px;height:15px;background:#fff;border:1px solid #cfcfcf;border-bottom-color:#b4b4b4;border-right-color:#bdbdbd;border-bottom:none"></div>
<div style="left:17px;top:808px;width:111px;height:15px;overflow:hidden">
<svg class="i" style="left:7px;top:3px;" width="16" height="16" viewBox="0 0 16 16"><rect x=".6" y=".6" width="14.800" height="14.800" rx="1" fill="#fdfdfd" stroke="#5a8fc9" stroke-width="1.100"/><rect x="2" y="2" width="12" height="12" fill="url(#fgg)"/></svg>
<span class="t" style="left:27.5px;top:5.69px;font-size:11px;line-height:11px;letter-spacing:-0.297px">Figure</span>
</div>
<div style="left:141px;top:172px;width:2px;height:349px;background:#6f6f6f"></div>
<svg class="i" style="left:6px;top:835px;" width="16" height="16" viewBox="0 0 16 16"><path d="M2.500 2.500H12.500V14.500H1.500V3.500Z" fill="#f3f7fb" stroke="#9ab0c6"/><path d="M12.500 2.500C12.500 1 15.500 1 15 3.500L12.500 5.500Z" fill="#dce6f0" stroke="#9ab0c6" stroke-width=".8"/><path d="M3 6H4.500M6 6H10.500M3 8.500H4.500M6 8.500H10.500M3 11H4.500M6 11H10.500" stroke="#3f78b0" stroke-width="1.100"/><path d="M1.500 4.500H12" stroke="#c9d6e3"/></svg>
<span class="t" style="left:26.5px;top:837.69px;font-size:11px;line-height:11px;color:#7a7a7a;letter-spacing:-0.329px;">Messages</span>
<div style="left:6px;top:854px;width:68px;height:6px;background:#6f6f6f"></div>
<div style="left:154px;top:107px;width:154px;height:21px;background:#c1c1c1"></div>
<span class="t" style="left:157px;top:112.69px;font-size:11px;line-height:11px;color:#000;letter-spacing:-0.144px;">New App 1 view1 Designer</span>
<svg class="i" style="left:292px;top:113px" width="10" height="8" viewBox="0 0 10 8"><path d="M1 .5L9 7.500M9 .5L1 7.500" stroke="#000" stroke-width="1.700"/></svg>
<div style="left:154px;top:126px;width:805px;height:2px;background:#c6c6c6"></div>
<svg class="i" style="left:918px;top:112.4px" width="40" height="8" viewBox="0 0 40 8"><path d="M4.500 0V7.500L0 3.750Z M14.500 0V7.500L19 3.750Z M28 1.500H36.500L32.250 6Z" fill="#000"/></svg>
<svg class="i" style="left:160px;top:135px;" width="16" height="16" viewBox="0 0 16 16"><circle cx="10.500" cy="5.500" r="4.200" fill="#ededed" stroke="#bcbcbc" stroke-width="1.600" stroke-dasharray="2.500 1.500"/><path d="M.8 1.500V13L3.800 10.200L5.800 14.800L7.600 14L5.600 9.500H9.300Z" fill="#e6e6e6" stroke="#a9a9a9" stroke-width=".9" stroke-linejoin="round"/></svg>
<svg class="i" style="left:197px;top:135px;" width="16" height="16" viewBox="0 0 16 16"><path d="M4.800 7.500V5A3.200 3.200 0 0 1 11.200 5V7.500" fill="none" stroke="#9a9a9a" stroke-width="1.800"/><rect x="2.500" y="7.500" width="11" height="7.500" rx=".8" fill="url(#lkg)" stroke="#b9800f"/><path d="M3.500 10H6.500M3.500 12.500H6.500M9.500 10H12.500M9.500 12.500H12.500" stroke="#c8900f" stroke-width=".9"/><rect x="7.200" y="9.300" width="1.600" height="3.400" rx=".5" fill="#3a2a08"/></svg>
<svg class="i" style="left:222px;top:135px;" width="16" height="16" viewBox="0 0 16 16"><path d="M4.800 7.500V4.500A3.200 3.200 0 0 1 11.200 4.500V5.500" fill="none" stroke="#9a9a9a" stroke-width="1.800"/><rect x="2.500" y="7.500" width="11" height="7.500" rx=".8" fill="url(#lkg)" stroke="#b9800f"/><path d="M3.500 10H6.500M3.500 12.500H6.500M9.500 10H12.500M9.500 12.500H12.500" stroke="#c8900f" stroke-width=".9"/><rect x="7.200" y="9.300" width="1.600" height="3.400" rx=".5" fill="#3a2a08"/></svg>
<svg class="i" style="left:260px;top:135px;" width="16" height="16" viewBox="0 0 16 16"><rect x="4.500" y="5.500" width="11" height="10" fill="url(#sqb)" stroke="#2f7fba" stroke-width="1.200"/><rect x=".5" y="1.500" width="8.500" height="6" fill="#fdfdfd" stroke="#a8a8a8"/><path d="M4 3.500H7" stroke="#ccc"/></svg>
<svg class="i" style="left:285px;top:135px;" width="16" height="16" viewBox="0 0 16 16"><rect x="6.500" y="8.500" width="9" height="6.500" fill="#fdfdfd" stroke="#a8a8a8"/><rect x=".6" y="1.600" width="11.500" height="9.500" fill="url(#sqb)" stroke="#2f7fba" stroke-width="1.200"/></svg>
<svg class="i" style="left:310px;top:135px;" width="16" height="16" viewBox="0 0 16 16"><rect x="2" y="2.500" width="11" height="11" fill="#ececec" stroke="#9a9a9a" stroke-width="1.100"/><g fill="#fff" stroke="#8f8f8f" stroke-width=".8"><circle cx="2" cy="2.500" r="1.300"/><circle cx="13" cy="2.500" r="1.300"/><circle cx="2" cy="13.500" r="1.300"/><circle cx="13" cy="13.500" r="1.300"/></g></svg>
<svg class="i" style="left:335px;top:135px;" width="16" height="16" viewBox="0 0 16 16"><rect x="2.500" y="2.500" width="4" height="11" fill="#f1f1f1" stroke="#d2d2d2" stroke-dasharray="1 1"/><rect x="9.500" y="2.500" width="4.500" height="11" fill="#ebebeb" stroke="#d2d2d2"/><path d="M8 1.500V14.500M6.500 3.500L8 1.500L9.500 3.500M6.500 12.500L8 14.500L9.500 12.500" stroke="#c4c4c4" fill="none"/></svg>
<svg class="i" style="left:360px;top:135px;" width="16" height="16" viewBox="0 0 16 16"><rect x="2.500" y="1.500" width="11" height="4" fill="#f1f1f1" stroke="#d2d2d2" stroke-dasharray="1 1"/><rect x="2.500" y="10.500" width="11" height="4" fill="#ebebeb" stroke="#d2d2d2"/><path d="M1.500 8H14.500M3.500 6.500L1.500 8L3.500 9.500M12.500 6.500L14.500 8L12.500 9.500" stroke="#c4c4c4" fill="none" stroke-width="1.200"/></svg>
<svg class="i" style="left:385px;top:135px;" width="16" height="16" viewBox="0 0 16 16"><rect x="1.500" y="1.500" width="13" height="13" fill="#cfe7fb" stroke="#7fb8e6"/><path d="M4 5h1M8 4h1M11 8h1M5 10h1M10 12h1" stroke="#9fd0f5"/><path d="M14 2L3 13" stroke="#2a78b8" stroke-width="2.600"/><path d="M1 15L1.500 10L6 14.500Z" fill="#2a78b8"/></svg>
<svg class="i" style="left:410px;top:135px;" width="16" height="16" viewBox="0 0 16 16"><rect x="1.500" y="1.500" width="13" height="13" fill="#efefef" stroke="#d6d6d6"/><path d="M4 4.500L6 2.500L8 4.500M9 9L11.500 6.500L14 9L11.500 11.500Z" fill="#f7f7f7" stroke="#c4c4c4" stroke-width=".9"/><path d="M2 9H7M5 7V14" stroke="#dcdcdc"/></svg>
<svg class="i" style="left:435px;top:135px;" width="16" height="16" viewBox="0 0 16 16"><rect x="1.500" y="1.500" width="11.500" height="11.500" fill="#efefef" stroke="#dcdcdc"/><path d="M8 9L10 7L15 12L13 14L11.500 15L11 13Z" fill="#e0e0e0" stroke="#c4c4c4" stroke-width=".9"/></svg>
<svg class="i" style="left:460px;top:135px;" width="16" height="16" viewBox="0 0 16 16"><rect x="3.500" y="5.500" width="11" height="9" fill="#efefef" stroke="#dcdcdc"/><path d="M1 4L3.500 1.500L6 4H4.500C4.500 7 5.500 8 7.500 8.500C4.500 9 2.500 7.500 2.500 4Z" fill="#dedede" stroke="#c4c4c4" stroke-width=".8"/></svg>
<svg class="i" style="left:485px;top:135px;" width="16" height="16" viewBox="0 0 16 16"><rect x="1.500" y="1.500" width="13" height="13" fill="#e2e2e2" stroke="#cfcfcf"/><path d="M2 2L6 8L2 14Z" fill="#c9c9c9"/></svg>
<div style="left:186px;top:133px;width:1px;height:20px;background:#b8b8b8"></div>
<div style="left:187px;top:133px;width:1px;height:20px;background:#fafafa"></div>
<div style="left:250px;top:133px;width:1px;height:20px;background:#b8b8b8"></div>
<div style="left:251px;top:133px;width:1px;height:20px;background:#fafafa"></div>
<div style="left:154px;top:160px;width:338px;height:647px;background:#f0f0f0"></div>
<div style="left:162px;top:160px;width:330px;height:647px;background-image:linear-gradient(to right,#dfdfdf 1px,transparent 1px);background-size:8px 8px"></div>
<div style="left:154px;top:168px;width:338px;height:639px;background-image:linear-gradient(to bottom,#dfdfdf 1px,transparent 1px);background-size:8px 8px"></div>
<div style="left:154px;top:160px;width:320px;height:480px;background:#fff"></div>
<div style="left:162px;top:160px;width:312px;height:480px;background-image:linear-gradient(to right,#e3e3e3 1px,transparent 1px);background-size:8px 8px"></div>
<div style="left:154px;top:168px;width:320px;height:472px;background-image:linear-gradient(to bottom,#e3e3e3 1px,transparent 1px);background-size:8px 8px"></div>
<div style="left:154px;top:806px;width:338px;height:2px;background:#fafafa"></div>
<div style="left:171px;top:813px;width:198px;height:2px;background:#6f6f6f"></div>
<div style="left:226px;top:217px;width:161px;height:263px;background:#fff"></div>
<div style="left:338px;top:220px;width:80px;height:82px;background:#fff"></div>
<svg class="i" style="left:228px;top:218px" width="84" height="134" viewBox="0 0 84 134">
<defs><linearGradient id="bs" x1="0" y1="0" x2="0" y2="1"><stop offset="0" stop-color="#d9820f"/><stop offset="0.35" stop-color="#c86f0b"/><stop offset="1" stop-color="#a55406"/></linearGradient>
<linearGradient id="tp" x1="0" y1="0" x2="1" y2="1"><stop offset="0" stop-color="#f3a314"/><stop offset="1" stop-color="#f29a0a"/></linearGradient>
<linearGradient id="hl" x1="0" y1="0" x2="1" y2="0"><stop offset="0" stop-color="#e8a040" stop-opacity="0"/><stop offset="0.5" stop-color="#fbe3b8"/><stop offset="1" stop-color="#e8a040" stop-opacity="0"/></linearGradient></defs>
<rect x="0" y="20" width="84" height="114" rx="13" ry="15" fill="url(#bs)"/>
<rect x="0" y="0" width="84" height="119" rx="13" ry="14" fill="url(#tp)"/>
<rect x="6" y="117" width="72" height="2.4" fill="url(#hl)"/>
<rect x="27" y="20" width="34" height="85" rx="6" fill="#c77a08"/>
<rect x="25" y="18" width="34" height="85" rx="6" fill="#fff"/>
<rect x="28.5" y="36.5" width="27" height="57.500" fill="#f29f0e"/>
<path d="M28.500 36.500H55.500V40H31.500V94H28.500Z" fill="#cf8308"/>
<ellipse cx="41.500" cy="26.500" rx="5" ry="3.800" fill="#f2a010"/>
<path d="M36.500 26.500A5 3.800 0 0 1 46.500 26.500A5 2.600 0 0 0 36.500 26.500Z" fill="#c77a08"/>
</svg>
<svg class="i" style="left:339px;top:224px" width="43" height="39" viewBox="0 0 43 39" preserveAspectRatio="none">
<rect x="0" y="8" width="43" height="31" rx="7" ry="6" fill="url(#bs)"/>
<rect x="0" y="0" width="43" height="34" rx="7" ry="5" fill="url(#tp)"/>
<rect x="3" y="33.300" width="37" height="1" fill="url(#hl)"/>
<rect x="13" y="5" width="17" height="25" rx="2" fill="#fff"/>
<rect x="14.500" y="10.500" width="14" height="17" fill="#f29f0e"/>
<rect x="20" y="7" width="5" height="2" rx="1" fill="#c77a08"/>
</svg>
<svg class="i" style="left:342px;top:225px;" width="16" height="16" viewBox="0 0 16 16"><rect x=".5" y="3.500" width="15" height="9.500" rx="1" fill="#dff0d0" stroke="#a9a9a9"/><rect x="1.500" y="4.500" width="13" height="4.500" fill="#bfe3f5"/><rect x="1.500" y="9" width="13" height="3" fill="#8fc93a"/><path d="M9.500 9.500V7M8 8L9.500 5.500L11 8Z" fill="#4f9a2a" stroke="#4f9a2a" stroke-width=".8"/><circle cx="4" cy="6.500" r="1" fill="#f5d76e"/></svg>
<div style="left:360px;top:286px;width:50px;height:12px;overflow:hidden"><span class="t" style="left:0;top:0;font-size:10px;line-height:11px;transform:scale(.47,.46);transform-origin:0 0;color:#000;font-weight:bold;white-space:pre;font-family:'Liberation Sans',sans-serif">Non existing image or
avai able on y at runtime.</span></div>
<span class="t" style="left:266.5px;top:431.1px;font-size:15px;line-height:19.4px;color:#000;transform:scale(0.6620,1);transform-origin:0 0">Non existing image or
avai able on y at runtime.</span>
<div style="left:333px;top:219px;width:10px;height:10px;background:#1f82dc;border:2px solid #1a78d2;box-shadow:inset 0 0 0 0 #fff"><div style="left:1px;top:1px;width:4px;height:4px;background:#3f97e6"></div></div>
<div style="left:372px;top:219px;width:10px;height:10px;background:#1f82dc;border:2px solid #1a78d2;box-shadow:inset 0 0 0 0 #fff"><div style="left:1px;top:1px;width:4px;height:4px;background:#3f97e6"></div></div>
<div style="left:412px;top:219px;width:10px;height:10px;background:#1f82dc;border:2px solid #1a78d2;box-shadow:inset 0 0 0 0 #fff"><div style="left:1px;top:1px;width:4px;height:4px;background:#3f97e6"></div></div>
<div style="left:333px;top:256px;width:10px;height:10px;background:#1f82dc;border:2px solid #1a78d2;box-shadow:inset 0 0 0 0 #fff"><div style="left:1px;top:1px;width:4px;height:4px;background:#3f97e6"></div></div>
<div style="left:412px;top:256px;width:10px;height:10px;background:#1f82dc;border:2px solid #1a78d2;box-shadow:inset 0 0 0 0 #fff"><div style="left:1px;top:1px;width:4px;height:4px;background:#3f97e6"></div></div>
<div style="left:333px;top:293px;width:10px;height:10px;background:#1f82dc;border:2px solid #1a78d2;box-shadow:inset 0 0 0 0 #fff"><div style="left:1px;top:1px;width:4px;height:4px;background:#3f97e6"></div></div>
<div style="left:372px;top:293px;width:10px;height:10px;background:#1f82dc;border:2px solid #1a78d2;box-shadow:inset 0 0 0 0 #fff"><div style="left:1px;top:1px;width:4px;height:4px;background:#3f97e6"></div></div>
<div style="left:412px;top:293px;width:10px;height:10px;background:#1f82dc;border:2px solid #1a78d2;box-shadow:inset 0 0 0 0 #fff"><div style="left:1px;top:1px;width:4px;height:4px;background:#3f97e6"></div></div>
<div style="left:207px;top:510px;width:140px;height:32px;background:#0d7bf7"></div>
<svg class="i" style="left:212px;top:510px;" width="14" height="15" viewBox="0 0 16 16"><rect x=".6" y="3.100" width="14.800" height="9.800" rx="2" fill="url(#pbg)" stroke="#5a8fc9" stroke-width="1.100"/></svg>
<span class="t" style="left:264.3px;top:519.70px;font-size:13px;line-height:13px;color:#eaf5ff;letter-spacing:0.047px;">button1</span>
<div style="left:209px;top:591px;width:140px;height:32px;background:#0d7bf7;border:1px solid #38b6ff;border-top:none"></div>
<svg class="i" style="left:213.4px;top:590.5px;" width="15" height="15" viewBox="0 0 16 16"><rect x=".5" y="3.500" width="15" height="11" fill="#fafafa" stroke="#9a9a9a"/><rect x=".5" y="1.500" width="6" height="2.500" fill="#fafafa" stroke="#8a8a8a"/><path d="M2 7H5M6 7H9M10 7H12M2 9.500H4M5 9.500H9M2 12H5M6 12H8" stroke="#555" stroke-width="1"/></svg>
<span class="t" style="left:257.6px;top:600.70px;font-size:13px;line-height:13px;color:#eaf5ff;letter-spacing:-0.325px;">dropdown1</span>
<div style="left:963px;top:107px;width:347px;height:21px;background:#c1c1c1"></div>
<svg class="i" style="left:968px;top:110px;" width="16" height="16" viewBox="0 0 16 16"><path d="M.8 5L8 1.800L14.500 5V11L8 14.800L.8 11Z" fill="#86c4ee" stroke="#4a97d2" stroke-width=".9" stroke-linejoin="round"/><path d="M.8 5L8 8.200L14.500 5" fill="none" stroke="#d6ecfb" stroke-width=".9"/><path d="M8 8.200V14.800" stroke="#5aa5dc" stroke-width=".8"/><path d="M1 5.200L8 8.400V14.600L1 11Z" fill="#6fb4e6" opacity=".55"/><ellipse cx="5" cy="3.600" rx="2.200" ry="1.200" fill="#b5dcf7" stroke="#5aa5dc" stroke-width=".6"/><ellipse cx="10.500" cy="3.600" rx="2.200" ry="1.200" fill="#b5dcf7" stroke="#5aa5dc" stroke-width=".6"/><path d="M14.300 6.200L8 13.400L7 15.500L9.200 14.700L15.600 7.500Z" fill="#f0a82a" stroke="#b8780f" stroke-width=".7"/><path d="M14.300 6.200L15.600 7.500" stroke="#e05a7a" stroke-width="1.600"/></svg>
<span class="t" style="left:987px;top:112.69px;font-size:11px;line-height:11px;color:#000;letter-spacing:-0.205px;">imgpush1 Properties</span>
<svg class="i" style="left:1090px;top:112px" width="197" height="8" viewBox="0 0 197 8"><rect width="197" height="8" fill="url(#gp)"/></svg>
<svg class="i" style="left:1296px;top:112px" width="8" height="11" viewBox="0 0 8 11"><path d="M1.5 0.5H6.5M2.5 0.5V6M5.5 0.5V6M4.8 0.5V6M0.5 6.5H7.5M4 6.5V11" stroke="#000" stroke-width="1" fill="none"/></svg>
<div style="left:1299px;top:151px;width:8px;height:280px;background:#f7f7f7"></div>
<div style="left:1299px;top:311px;width:8px;height:19px;background:#e9e9e9"></div>
<div style="left:1299px;top:150px;width:9px;height:1px;background:#b5b5b5"></div>
<div style="left:1299px;top:311px;width:9px;height:1px;background:#b5b5b5"></div>
<div style="left:1299px;top:329px;width:9px;height:1px;background:#b5b5b5"></div>
<div style="left:1299px;top:430px;width:9px;height:1px;background:#b5b5b5"></div>
<div style="left:1298px;top:465px;width:12px;height:21px;background:#c1c1c1"></div>
<div style="left:1299px;top:471px;width:3px;height:7px;background:#111"></div>
<div style="left:1299px;top:477px;width:4px;height:1px;background:#111"></div>
<div style="left:1300px;top:478px;width:1px;height:4px;background:#111"></div>
<div style="left:1314px;top:107px;width:135px;height:21px;background:#c1c1c1"></div>
<svg class="i" style="left:1319px;top:110px;" width="16" height="16" viewBox="0 0 16 16"><rect x=".7" y="1.200" width="14.600" height="13.600" rx="1.200" fill="#fdfdfd" stroke="#3f86c4" stroke-width="1.200"/><path d="M1.500 3.500H14.500" stroke="#a9cdea" stroke-width="1.400"/><path d="M3.500 7.500H5.500M7 7.500H12.500M3.500 10.500H5.500M7 10.500H12.500" stroke="#9a9a9a" stroke-width="1"/></svg>
<span class="t" style="left:1339px;top:112.69px;font-size:11px;line-height:11px;color:#000;letter-spacing:-0.629px;">Views</span>
<svg class="i" style="left:1373px;top:112px" width="54" height="8" viewBox="0 0 54 8"><rect width="54" height="8" fill="url(#gp)"/></svg>
<svg class="i" style="left:1435px;top:112px" width="8" height="11" viewBox="0 0 8 11"><path d="M1.5 0.5H6.5M2.5 0.5V6M5.5 0.5V6M4.8 0.5V6M0.5 6.5H7.5M4 6.5V11" stroke="#000" stroke-width="1" fill="none"/></svg>
<div style="left:1453px;top:107px;width:135px;height:21px;background:#c1c1c1"></div>
<svg class="i" style="left:1457px;top:110px;" width="16" height="16" viewBox="0 0 16 16"><path d="M5 4L10 1.500L15 4V8L10 10.500L5 8Z" fill="#f5a03a" stroke="#d9781a" stroke-width=".8" stroke-linejoin="round"/><path d="M5 4L10 6.500L15 4M10 6.500V10.500" fill="none" stroke="#fbd0a0" stroke-width=".8"/><path d="M1 9L5.500 7L10 9V12.500L5.500 15L1 12.500Z" fill="#7fc0f0" stroke="#4a97d2" stroke-width=".8" stroke-linejoin="round"/><path d="M1 9L5.500 11L10 9M5.500 11V15" fill="none" stroke="#cfe7fb" stroke-width=".8"/><path d="M8.500 9.500L12 8L15.500 9.500V12.500L12 14.500L8.500 12.500Z" fill="#9fd33a" stroke="#6aa81e" stroke-width=".8" stroke-linejoin="round"/><path d="M8.500 9.500L12 11L15.500 9.500M12 11V14.500" fill="none" stroke="#d6f0a0" stroke-width=".8"/></svg>
<span class="t" style="left:1477.5px;top:112.69px;font-size:11px;line-height:11px;color:#000;letter-spacing:-0.120px;">Controls</span>
<svg class="i" style="left:1525px;top:112px" width="40" height="8" viewBox="0 0 40 8"><rect width="40" height="8" fill="url(#gp)"/></svg>
<svg class="i" style="left:1574px;top:112px" width="8" height="11" viewBox="0 0 8 11"><path d="M1.5 0.5H6.5M2.5 0.5V6M5.5 0.5V6M4.8 0.5V6M0.5 6.5H7.5M4 6.5V11" stroke="#000" stroke-width="1" fill="none"/></svg>
<div style="left:1315.5px;top:132px;width:132.5px;height:20px;background:#fff;border-bottom:1px solid #858585"></div>
<span class="t" style="left:1316.5px;top:135.69px;font-size:11px;line-height:11px;color:#6a6a6a;letter-spacing:-0.309px;">Search</span>
<div style="left:1454.5px;top:132px;width:132.5px;height:20px;background:#fff;border-bottom:1px solid #858585"></div>
<span class="t" style="left:1455.5px;top:135.69px;font-size:11px;line-height:11px;color:#6a6a6a;letter-spacing:-0.309px;">Search</span>
<div style="left:1314px;top:155px;width:135px;height:306px;background:#fff;border:1px solid #828282"></div>
<div style="left:1453px;top:155px;width:135px;height:306px;background:#fff;border:1px solid #828282"></div>
<div style="left:1316px;top:157px;width:131px;height:13px;background:#0078d7"></div>
<span class="t" style="left:1318px;top:158.99px;font-size:11px;line-height:11px;color:#fff;letter-spacing:-0.025px;">view1</span>
<svg class="i" style="left:1466px;top:164px" width="12" height="50" viewBox="0 0 12 50"><path d="M0.500 1V49M1 0.500H11M1 16.500H11M1 32.500H11M1 48.500H11" stroke="#7a7a7a" stroke-dasharray="1 1" fill="none"/></svg>
<div style="left:1476px;top:205px;width:71px;height:15px;background:#dcdcdc"></div>
<svg class="i" style="left:1477px;top:157px;" width="15" height="15" viewBox="0 0 16 16"><rect x=".6" y=".6" width="14.800" height="14.800" rx="1" fill="#fdfdfd" stroke="#5a8fc9" stroke-width="1.100"/><rect x="2" y="2" width="12" height="7.500" fill="#f5e9a0"/><rect x="2" y="2" width="12" height="4" fill="#bfe3f5"/><rect x="2" y="9" width="12" height="4.500" fill="#8fc93a"/><path d="M8.500 10V8M6.500 8.500L8.500 4.500L10.500 8.500Z" fill="#3f8a2a" stroke="#3f8a2a" stroke-width=".8"/></svg>
<span class="t" style="left:1497.4px;top:159.99px;font-size:11px;line-height:11px;color:#000;letter-spacing:-0.246px;">image1</span>
<svg class="i" style="left:1477px;top:173px;" width="15" height="15" viewBox="0 0 16 16"><rect x=".6" y="3.100" width="14.800" height="9.800" rx="2" fill="url(#pbg)" stroke="#5a8fc9" stroke-width="1.100"/></svg>
<span class="t" style="left:1497.4px;top:175.99px;font-size:11px;line-height:11px;color:#000;letter-spacing:0.271px;">button1</span>
<svg class="i" style="left:1477px;top:189px;" width="15" height="15" viewBox="0 0 16 16"><rect x=".5" y="3.500" width="15" height="11" fill="#fafafa" stroke="#9a9a9a"/><rect x=".5" y="1.500" width="6" height="2.500" fill="#fafafa" stroke="#8a8a8a"/><path d="M2 7H5M6 7H9M10 7H12M2 9.500H4M5 9.500H9M2 12H5M6 12H8" stroke="#555" stroke-width="1"/></svg>
<span class="t" style="left:1497.4px;top:191.99px;font-size:11px;line-height:11px;color:#000;letter-spacing:0.019px;">dropdown1</span>
<svg class="i" style="left:1477px;top:205px;" width="15" height="15" viewBox="0 0 16 16"><rect x=".5" y="3.500" width="15" height="9.500" rx="1" fill="#dff0d0" stroke="#a9a9a9"/><rect x="1.500" y="4.500" width="13" height="4.500" fill="#bfe3f5"/><rect x="1.500" y="9" width="13" height="3" fill="#8fc93a"/><path d="M9.500 9.500V7M8 8L9.500 5.500L11 8Z" fill="#4f9a2a" stroke="#4f9a2a" stroke-width=".8"/><circle cx="4" cy="6.500" r="1" fill="#f5d76e"/></svg>
<span class="t" style="left:1497.4px;top:207.99px;font-size:11px;line-height:11px;color:#000;letter-spacing:-0.262px;">imgpush1</span>
<div style="left:1314px;top:465px;width:135px;height:21px;background:#c1c1c1"></div>
<svg class="i" style="left:1319px;top:468px;" width="16" height="16" viewBox="0 0 16 16"><rect x=".7" y="1.700" width="14.600" height="12.600" rx="1.200" fill="#fdfdfd" stroke="#2f7fba" stroke-width="1.200"/><rect x="1.300" y="2.300" width="13.400" height="2.700" fill="#3f8fcc"/><path d="M4 7.500H12" stroke="#8a8a8a" stroke-width="1"/><rect x="4.500" y="9.500" width="7" height="3" rx="1.200" fill="#bfe0f7" stroke="#2f7fba" stroke-width=".9"/></svg>
<span class="t" style="left:1338.5px;top:470.69px;font-size:11px;line-height:11px;color:#000;letter-spacing:-0.455px;">Dialogs</span>
<svg class="i" style="left:1381px;top:470px" width="46" height="8" viewBox="0 0 46 8"><rect width="46" height="8" fill="url(#gp)"/></svg>
<svg class="i" style="left:1435px;top:470px" width="8" height="11" viewBox="0 0 8 11"><path d="M1.5 0.5H6.5M2.5 0.5V6M5.5 0.5V6M4.8 0.5V6M0.5 6.5H7.5M4 6.5V11" stroke="#000" stroke-width="1" fill="none"/></svg>
<div style="left:1453px;top:465px;width:135px;height:21px;background:#c1c1c1"></div>
<svg class="i" style="left:1458px;top:468px;" width="16" height="16" viewBox="0 0 16 16"><rect x=".5" y=".5" width="15" height="15" fill="#cfe7fb" stroke="#a9d0f0" stroke-width=".8"/><path d="M1 1h2.800v2.800h-2.800zM6.600 1h2.800v2.800h-2.800zM12.200 1h2.800v2.800h-2.800zM3.800 3.800h2.800v2.800h-2.800zM9.400 3.800h2.800v2.800h-2.800zM1 6.600h2.800v2.800h-2.800zM6.600 6.600h2.800v2.800h-2.800zM12.200 6.600h2.800v2.800h-2.800zM3.800 9.400h2.800v2.800h-2.800zM9.400 9.400h2.800v2.800h-2.800zM1 12.200h2.800v2.800h-2.800zM6.600 12.200h2.800v2.800h-2.800zM12.200 12.200h2.800v2.800h-2.800z" fill="#b5d9f7"/></svg>
<span class="t" style="left:1477.5px;top:470.69px;font-size:11px;line-height:11px;color:#000;letter-spacing:-0.380px;">Frames</span>
<svg class="i" style="left:1520px;top:470px" width="45" height="8" viewBox="0 0 45 8"><rect width="45" height="8" fill="url(#gp)"/></svg>
<svg class="i" style="left:1574px;top:470px" width="8" height="11" viewBox="0 0 8 11"><path d="M1.5 0.5H6.5M2.5 0.5V6M5.5 0.5V6M4.8 0.5V6M0.5 6.5H7.5M4 6.5V11" stroke="#000" stroke-width="1" fill="none"/></svg>
<div style="left:1315.5px;top:490px;width:132.5px;height:20px;background:#fff;border-bottom:1px solid #858585"></div>
<span class="t" style="left:1316.5px;top:493.69px;font-size:11px;line-height:11px;color:#6a6a6a;letter-spacing:-0.309px;">Search</span>
<div style="left:1454.5px;top:490px;width:132.5px;height:20px;background:#fff;border-bottom:1px solid #858585"></div>
<span class="t" style="left:1455.5px;top:493.69px;font-size:11px;line-height:11px;color:#6a6a6a;letter-spacing:-0.309px;">Search</span>
<div style="left:1314px;top:513px;width:135px;height:310px;background:#fff;border:1px solid #828282"></div>
<div style="left:1453px;top:513px;width:135px;height:310px;background:#fff;border:1px solid #828282"></div>
<div style="left:492px;top:135px;width:807px;height:697px;background:#f0f0f0;border:1px solid #2a76b2;box-shadow:inset 0 0 0 1px rgba(222,248,255,.85),0 0 0 1px rgba(225,246,255,.7),0 0 6px 1px rgba(255,255,255,.6)"></div>
<svg class="i" style="left:506px;top:145px;" width="16" height="16" viewBox="0 0 16 16"><g transform="translate(0 0) scale(1.0)"><path d="M.600 1.600C.600 1 1 .600 1.600 .600H5.200L6.700 2.800H13C13.600 2.800 14 3.200 14 3.800V12.400H.600Z" fill="#f7d470" stroke="#dba63a" stroke-width="1.100" stroke-linejoin="round"/><path d="M1.500 5H13.200" stroke="#fceeb5" stroke-width="1.200"/></g><path d="M12.600 11L15 13.800" stroke="#e09a3a" stroke-width="2.200" stroke-linecap="round"/><circle cx="10.400" cy="8.300" r="3.500" fill="#a9dcf7" stroke="#5b8fb3" stroke-width="1.300"/></svg>
<span class="t" style="left:525.5px;top:148.19px;font-size:11px;line-height:11px;color:#727272;letter-spacing:-0.186px;">New App 1 imgpush1 Events</span>
<svg class="i" style="left:1277px;top:144px" width="10" height="8" viewBox="0 0 10 8"><path d="M1 .5L9 7.500M9 .5L1 7.500" stroke="#000" stroke-width="1.900"/></svg>
<div style="left:563px;top:175px;width:25px;height:23px;background:#cce4f7;border:1px solid #9fcdf3"></div>
<svg class="i" style="left:504px;top:179px;" width="16" height="16" viewBox="0 0 16 16"><path d="M1 3.500C1 3 1.400 2.500 2 2.500H5.500L7 4.500H12.500V7H4L1 13Z" fill="#f0be4a" stroke="#d29c2a" stroke-linejoin="round"/><path d="M3.800 7H15L12 13.500H1Z" fill="#fbdc84" stroke="#d9a632" stroke-linejoin="round"/></svg>
<svg class="i" style="left:529px;top:179px;" width="16" height="16" viewBox="0 0 16 16"><g transform="translate(0 0) scale(1.0)"><path d="M.8 .8H15.200V15.200H2.500L.8 13.500Z" fill="#86c6f3" stroke="#2a7cbd" stroke-width="1.300" stroke-linejoin="round"/><rect x="2.800" y="1.500" width="10.400" height="6.200" fill="#fdfdfd"/><path d="M4 3.500H7M8 3.500H12M4 5.800H5.500M6.500 5.800H9.500M10.500 5.800H12" stroke="#4a4a4a" stroke-width="1.100"/><rect x="5" y="9.800" width="6.500" height="5" fill="#fdfdfd"/><rect x="6.200" y="10.800" width="1.800" height="3.400" fill="#333"/></g></svg>
<svg class="i" style="left:567px;top:179px;" width="16" height="16" viewBox="0 0 16 16"><g font-family="Liberation Sans, sans-serif" font-weight="bold" fill="#4a4a4a"><text x="5.500" y="7.500" font-size="9" font-style="italic">A</text><text x="0" y="15" font-size="9">bc</text></g><path d="M12 4.500H15" stroke="#4a4a4a" stroke-width="1.300"/></svg>
<svg class="i" style="left:592px;top:179px;" width="16" height="16" viewBox="0 0 16 16"><rect x=".6" y="1.600" width="14.800" height="12.800" fill="#fff" stroke="#8a8a8a"/><rect x="12" y="2" width="3" height="12" fill="#e3e3e3" stroke="#9a9a9a" stroke-width=".6"/><path d="M2 4.500H11M2 8H11M2 11.500H11" stroke="#3f86c4" stroke-width="1.400"/><rect x="13" y="3" width="1" height="1" fill="#555"/><rect x="13" y="12" width="1" height="1" fill="#555"/></svg>
<svg class="i" style="left:617px;top:179px;" width="16" height="16" viewBox="0 0 16 16"><rect x=".7" y="1.200" width="14.600" height="13.600" rx="1" fill="#fff" stroke="#2f7fba" stroke-width="1.200"/><rect x="1.300" y="1.800" width="13.400" height="2.200" fill="#4a97d2"/><g><rect x="2.500" y="6" width="2" height="2" fill="#e8b33a"/><rect x="5.500" y="6" width="2" height="2" fill="#d9534f"/><rect x="8.500" y="6" width="2" height="2" fill="#e8b33a"/><rect x="11.500" y="6" width="2" height="2" fill="#7a9fd0"/><rect x="2.500" y="9" width="2" height="2" fill="#7ab648"/><rect x="5.500" y="9" width="2" height="2" fill="#e8863a"/><rect x="8.500" y="9" width="2" height="2" fill="#d9534f"/><rect x="11.500" y="9" width="2" height="2" fill="#7ab648"/><rect x="2.500" y="12" width="2" height="1.800" fill="#7a9fd0"/><rect x="5.500" y="12" width="2" height="1.800" fill="#7ab648"/><rect x="8.500" y="12" width="2" height="1.800" fill="#4a97d2"/><rect x="11.500" y="12" width="2" height="1.800" fill="#e8863a"/></g></svg>
<svg class="i" style="left:656px;top:179px;" width="16" height="16" viewBox="0 0 16 16"><rect x="2.500" y="2.500" width="11" height="12" fill="#e9e9e9" stroke="#c4c4c4"/><rect x="6" y="1" width="4" height="2.500" fill="#d8d8d8" stroke="#c4c4c4" stroke-width=".7"/><path d="M4 8H8V6L11.500 9L8 12V10H4Z" fill="#f5f5f5" stroke="#a9a9a9" stroke-width=".8"/></svg>
<svg class="i" style="left:681px;top:179px;" width="16" height="16" viewBox="0 0 16 16"><path d="M5 1L9.500 10.500M10.500 1.500L6 10.500" stroke="#a9a9a9" stroke-width="1.100" fill="none"/><ellipse cx="5" cy="12.500" rx="1.800" ry="2.200" fill="none" stroke="#9a9a9a" stroke-width="1.100"/><ellipse cx="11" cy="12.500" rx="2" ry="1.800" fill="none" stroke="#9a9a9a" stroke-width="1.100"/></svg>
<svg class="i" style="left:706px;top:179px;" width="16" height="16" viewBox="0 0 16 16"><rect x="1.500" y="2.500" width="9.500" height="12" rx="1" fill="#c98c4a" stroke="#8d5a24"/><rect x="4" y="1" width="4.500" height="2.800" fill="#9a9a9a" stroke="#6a6a6a" stroke-width=".7"/><rect x="6.500" y="6.500" width="8.500" height="8.500" fill="#fafafa" stroke="#9a9a9a"/><path d="M8 9H10M11 9H13.500M8 11H9.500M10.500 11H13M8 13H11" stroke="#555" stroke-width=".8"/></svg>
<svg class="i" style="left:731px;top:179px;" width="16" height="16" viewBox="0 0 16 16"><rect x="1.500" y="1.500" width="13" height="13" fill="#e6e6e6" stroke="#bdbdbd" stroke-dasharray="1.500 1"/><rect x="3" y="3" width="10" height="10" fill="#dedede"/></svg>
<svg class="i" style="left:768px;top:179px;" width="16" height="16" viewBox="0 0 16 16"><path d="M1 6.500V11.500H6L4.300 9.800C7 7.500 11 7.500 14.500 10.500C13.500 6 7.500 3.500 2.700 8.200Z" fill="#d0d0d0" stroke="#c2c2c2" stroke-width=".6"/></svg>
<svg class="i" style="left:793px;top:179px;" width="16" height="16" viewBox="0 0 16 16"><path d="M15 6.500V11.500H10L11.700 9.800C9 7.500 5 7.500 1.500 10.500C2.500 6 8.500 3.500 13.300 8.200Z" fill="#d0d0d0" stroke="#c2c2c2" stroke-width=".6"/></svg>
<svg class="i" style="left:831px;top:179px;" width="16" height="16" viewBox="0 0 16 16"><rect x=".7" y="1.200" width="13.600" height="10" rx="1" fill="url(#mng)" stroke="#2a6fa8" stroke-width="1.200"/><path d="M4 14.500H10.500M7.300 11.500V14.500" stroke="#5a8fb8" stroke-width="1.400"/><path d="M7 9.300H11V7.300L15.800 11L11 14.700V12.700H7Z" fill="#93d42a" stroke="#4f9510" stroke-width=".9" stroke-linejoin="round"/></svg>
<svg class="i" style="left:869px;top:179px;" width="16" height="16" viewBox="0 0 16 16"><rect x="1" y="6.500" width="6" height="8.500" rx="1.200" fill="#5e5e5e"/><rect x="9" y="6.500" width="6" height="8.500" rx="1.200" fill="#5e5e5e"/><rect x="2.300" y="1" width="3.500" height="6" rx="1" fill="#6e6e6e"/><rect x="10.200" y="1" width="3.500" height="6" rx="1" fill="#6e6e6e"/><rect x="6.500" y="5" width="3" height="4" fill="#4a4a4a"/><path d="M1 9.500H7M9 9.500H15M1 12.500H7M9 12.500H15" stroke="#b5b5b5" stroke-width=".8"/></svg>
<svg class="i" style="left:894px;top:179px;" width="16" height="16" viewBox="0 0 16 16"><rect x=".5" y=".5" width="15" height="15" fill="#fdfdfd" stroke="#a9a9a9"/><g font-family="Liberation Serif, serif" font-weight="bold" fill="#2a6fb5"><text x="2" y="7.500" font-size="8.500">b</text><text x="7.500" y="13.500" font-size="10">a</text></g><path d="M3.500 9V12H6M4.800 10.600L6.300 12L4.800 13.400" stroke="#3a9a2a" stroke-width="1" fill="none"/></svg>
<svg class="i" style="left:919px;top:179px;" width="16" height="16" viewBox="0 0 16 16"><path d="M11 2.500V13.500L4.500 8Z" fill="#e4e4e4" stroke="#c4c4c4" stroke-width="1" stroke-linejoin="round"/></svg>
<svg class="i" style="left:944px;top:179px;" width="16" height="16" viewBox="0 0 16 16"><path d="M5 2.500V13.500L11.500 8Z" fill="#e4e4e4" stroke="#c4c4c4" stroke-width="1" stroke-linejoin="round"/></svg>
<svg class="i" style="left:982px;top:179px;" width="16" height="16" viewBox="0 0 16 16"><path d="M1.500 1H14.500L13.300 13.500L8 15.500L2.700 13.500Z" fill="#a9a9a9"/><text x="8" y="12" font-size="10" font-weight="bold" text-anchor="middle" fill="#f0f0f0" font-family="Liberation Sans, sans-serif">5</text></svg>
<svg class="i" style="left:1007px;top:179px;" width="16" height="16" viewBox="0 0 16 16"><path d="M2 .8H10.500L14.500 4.800V15.200H2Z" fill="#a9a9a9"/><path d="M10.500 .8V4.800H14.500Z" fill="#d6d6d6"/><path d="M4 13C6 11 7.500 7 7 4C6.500 3 8.500 3 8 5C7.500 8 10 10.500 12.500 10.500C13.500 10.500 13 11.800 11.500 11.300C9 10.500 6 11.500 4.200 13.200Z" fill="none" stroke="#eee" stroke-width="1"/></svg>
<div style="left:556px;top:176px;width:1px;height:22px;background:#b8b8b8"></div>
<div style="left:557px;top:176px;width:1px;height:22px;background:#fafafa"></div>
<div style="left:644px;top:176px;width:1px;height:22px;background:#b8b8b8"></div>
<div style="left:645px;top:176px;width:1px;height:22px;background:#fafafa"></div>
<div style="left:757px;top:176px;width:1px;height:22px;background:#b8b8b8"></div>
<div style="left:758px;top:176px;width:1px;height:22px;background:#fafafa"></div>
<div style="left:820px;top:176px;width:1px;height:22px;background:#b8b8b8"></div>
<div style="left:821px;top:176px;width:1px;height:22px;background:#fafafa"></div>
<div style="left:858px;top:176px;width:1px;height:22px;background:#b8b8b8"></div>
<div style="left:859px;top:176px;width:1px;height:22px;background:#fafafa"></div>
<div style="left:971px;top:176px;width:1px;height:22px;background:#b8b8b8"></div>
<div style="left:972px;top:176px;width:1px;height:22px;background:#fafafa"></div>
<div style="left:499px;top:203px;width:793px;height:593px;background:#fff"></div>
<div style="left:553px;top:203px;width:739px;height:17px;background:#d5e8fb"></div>
<div style="left:551px;top:203px;width:2px;height:17px;background:#000"></div>
<span class="t" style="left:523px;top:209.80px;font-size:8.5px;line-height:8.5px;color:#a57878;font-family:'Liberation Mono',monospace;">1</span>
<div style="left:499px;top:796px;width:793px;height:1px;background:#e3e3e3"></div>
<div style="left:499px;top:797px;width:59px;height:27px;background:#f6f6f6;border-right:1px solid #e2e2e2"></div>
<svg class="i" style="left:507px;top:804.5px;" width="16" height="15.5" viewBox="0 0 16 16"><path d="M4.300 1.200H13.800C15.600 1.200 15.600 4.200 13.800 4.200H12.800L11.600 10" fill="none" stroke="#2590d2" stroke-width="1.300"/><path d="M4.600 1.200C3.300 1.200 3.200 2.800 3.600 3.600L2.300 11.300H.9C.2 13 1 14.600 2.400 14.600H5.500" fill="none" stroke="#2590d2" stroke-width="1.300"/><path d="M4.500 1.800H13L11.400 11.500H2.800Z" fill="#f2f9fe"/><path d="M2.300 11.300H5.500" stroke="#2590d2" stroke-width="1.100"/><path d="M7.600 9L5.200 11.800L7.600 14.600M12.300 9L14.700 11.800L12.300 14.600" fill="none" stroke="#1878c4" stroke-width="1.800"/><path d="M10.700 8.600L9.200 15" stroke="#1878c4" stroke-width="1.500"/></svg>
<span class="t" style="left:528.8px;top:807.69px;font-size:11px;line-height:11px;color:#000;letter-spacing:-0.626px;">Click</span>
<svg class="i" style="left:562px;top:802.5px;" width="16" height="15.5" viewBox="0 0 16 16"><path d="M4.300 1.200H13.800C15.600 1.200 15.600 4.200 13.800 4.200H12.800L11.600 10" fill="none" stroke="#2590d2" stroke-width="1.300"/><path d="M4.600 1.200C3.300 1.200 3.200 2.800 3.600 3.600L2.300 11.300H.9C.2 13 1 14.600 2.400 14.600H5.500" fill="none" stroke="#2590d2" stroke-width="1.300"/><path d="M4.500 1.800H13L11.400 11.500H2.800Z" fill="#f2f9fe"/><path d="M2.300 11.300H5.500" stroke="#2590d2" stroke-width="1.100"/><path d="M7.600 9L5.200 11.800L7.600 14.600M12.300 9L14.700 11.800L12.300 14.600" fill="none" stroke="#1878c4" stroke-width="1.800"/><path d="M10.700 8.600L9.200 15" stroke="#1878c4" stroke-width="1.500"/></svg>
<span class="t" style="left:583.5px;top:805.69px;font-size:11px;line-height:11px;color:#000;letter-spacing:-0.542px;">DblClick</span>
<svg class="i" style="left:632px;top:802.5px;" width="16" height="15.5" viewBox="0 0 16 16"><path d="M4.300 1.200H13.800C15.600 1.200 15.600 4.200 13.800 4.200H12.800L11.600 10" fill="none" stroke="#2590d2" stroke-width="1.300"/><path d="M4.600 1.200C3.300 1.200 3.200 2.800 3.600 3.600L2.300 11.300H.9C.2 13 1 14.600 2.400 14.600H5.500" fill="none" stroke="#2590d2" stroke-width="1.300"/><path d="M4.500 1.800H13L11.400 11.500H2.800Z" fill="#f2f9fe"/><path d="M2.300 11.300H5.500" stroke="#2590d2" stroke-width="1.100"/><path d="M7.600 9L5.200 11.800L7.600 14.600M12.300 9L14.700 11.800L12.300 14.600" fill="none" stroke="#1878c4" stroke-width="1.800"/><path d="M10.700 8.600L9.200 15" stroke="#1878c4" stroke-width="1.500"/></svg>
<span class="t" style="left:653.5px;top:805.69px;font-size:11px;line-height:11px;color:#000;letter-spacing:-0.391px;">Focus</span>
<svg class="i" style="left:694px;top:802.5px;" width="16" height="15.5" viewBox="0 0 16 16"><path d="M4.300 1.200H13.800C15.600 1.200 15.600 4.200 13.800 4.200H12.800L11.600 10" fill="none" stroke="#2590d2" stroke-width="1.300"/><path d="M4.600 1.200C3.300 1.200 3.200 2.800 3.600 3.600L2.300 11.300H.9C.2 13 1 14.600 2.400 14.600H5.500" fill="none" stroke="#2590d2" stroke-width="1.300"/><path d="M4.500 1.800H13L11.400 11.500H2.800Z" fill="#f2f9fe"/><path d="M2.300 11.300H5.500" stroke="#2590d2" stroke-width="1.100"/><path d="M7.600 9L5.200 11.800L7.600 14.600M12.300 9L14.700 11.800L12.300 14.600" fill="none" stroke="#1878c4" stroke-width="1.800"/><path d="M10.700 8.600L9.200 15" stroke="#1878c4" stroke-width="1.500"/></svg>
<span class="t" style="left:715.5px;top:805.69px;font-size:11px;line-height:11px;color:#000;letter-spacing:-0.515px;">Blur</span>
<svg class="i" style="left:746px;top:802.5px;" width="16" height="15.5" viewBox="0 0 16 16"><path d="M4.300 1.200H13.800C15.600 1.200 15.600 4.200 13.800 4.200H12.800L11.600 10" fill="none" stroke="#2590d2" stroke-width="1.300"/><path d="M4.600 1.200C3.300 1.200 3.200 2.800 3.600 3.600L2.300 11.300H.9C.2 13 1 14.600 2.400 14.600H5.500" fill="none" stroke="#2590d2" stroke-width="1.300"/><path d="M4.500 1.800H13L11.400 11.500H2.800Z" fill="#f2f9fe"/><path d="M2.300 11.300H5.500" stroke="#2590d2" stroke-width="1.100"/><path d="M7.600 9L5.200 11.800L7.600 14.600M12.300 9L14.700 11.800L12.300 14.600" fill="none" stroke="#1878c4" stroke-width="1.800"/><path d="M10.700 8.600L9.200 15" stroke="#1878c4" stroke-width="1.500"/></svg>
<span class="t" style="left:767.5px;top:805.69px;font-size:11px;line-height:11px;color:#000;letter-spacing:-0.440px;">MouseUp</span>
<svg class="i" style="left:824px;top:802.5px;" width="16" height="15.5" viewBox="0 0 16 16"><path d="M4.300 1.200H13.800C15.600 1.200 15.600 4.200 13.800 4.200H12.800L11.600 10" fill="none" stroke="#2590d2" stroke-width="1.300"/><path d="M4.600 1.200C3.300 1.200 3.200 2.800 3.600 3.600L2.300 11.300H.9C.2 13 1 14.600 2.400 14.600H5.500" fill="none" stroke="#2590d2" stroke-width="1.300"/><path d="M4.500 1.800H13L11.400 11.500H2.800Z" fill="#f2f9fe"/><path d="M2.300 11.300H5.500" stroke="#2590d2" stroke-width="1.100"/><path d="M7.600 9L5.200 11.800L7.600 14.600M12.300 9L14.700 11.800L12.300 14.600" fill="none" stroke="#1878c4" stroke-width="1.800"/><path d="M10.700 8.600L9.200 15" stroke="#1878c4" stroke-width="1.500"/></svg>
<span class="t" style="left:845.5px;top:805.69px;font-size:11px;line-height:11px;color:#000;letter-spacing:-0.380px;">MouseMove</span>
<svg class="i" style="left:915px;top:802.5px;" width="16" height="15.5" viewBox="0 0 16 16"><path d="M4.300 1.200H13.800C15.600 1.200 15.600 4.200 13.800 4.200H12.800L11.600 10" fill="none" stroke="#2590d2" stroke-width="1.300"/><path d="M4.600 1.200C3.300 1.200 3.200 2.800 3.600 3.600L2.300 11.300H.9C.2 13 1 14.600 2.400 14.600H5.500" fill="none" stroke="#2590d2" stroke-width="1.300"/><path d="M4.500 1.800H13L11.400 11.500H2.800Z" fill="#f2f9fe"/><path d="M2.300 11.300H5.500" stroke="#2590d2" stroke-width="1.100"/><path d="M7.600 9L5.200 11.800L7.600 14.600M12.300 9L14.700 11.800L12.300 14.600" fill="none" stroke="#1878c4" stroke-width="1.800"/><path d="M10.700 8.600L9.200 15" stroke="#1878c4" stroke-width="1.500"/></svg>
<span class="t" style="left:936.5px;top:805.69px;font-size:11px;line-height:11px;color:#000;letter-spacing:-0.349px;">MouseDown</span>
<svg class="i" style="left:1007px;top:802.5px;" width="16" height="15.5" viewBox="0 0 16 16"><path d="M4.300 1.200H13.800C15.600 1.200 15.600 4.200 13.800 4.200H12.800L11.600 10" fill="none" stroke="#2590d2" stroke-width="1.300"/><path d="M4.600 1.200C3.300 1.200 3.200 2.800 3.600 3.600L2.300 11.300H.9C.2 13 1 14.600 2.400 14.600H5.500" fill="none" stroke="#2590d2" stroke-width="1.300"/><path d="M4.500 1.800H13L11.400 11.500H2.800Z" fill="#f2f9fe"/><path d="M2.300 11.300H5.500" stroke="#2590d2" stroke-width="1.100"/><path d="M7.600 9L5.200 11.800L7.600 14.600M12.300 9L14.700 11.800L12.300 14.600" fill="none" stroke="#1878c4" stroke-width="1.800"/><path d="M10.700 8.600L9.200 15" stroke="#1878c4" stroke-width="1.500"/></svg>
<span class="t" style="left:1028.5px;top:805.69px;font-size:11px;line-height:11px;color:#000;letter-spacing:-0.281px;">MouseEnter</span>
<svg class="i" style="left:1098px;top:802.5px;" width="16" height="15.5" viewBox="0 0 16 16"><path d="M4.300 1.200H13.800C15.600 1.200 15.600 4.200 13.800 4.200H12.800L11.600 10" fill="none" stroke="#2590d2" stroke-width="1.300"/><path d="M4.600 1.200C3.300 1.200 3.200 2.800 3.600 3.600L2.300 11.300H.9C.2 13 1 14.600 2.400 14.600H5.500" fill="none" stroke="#2590d2" stroke-width="1.300"/><path d="M4.500 1.800H13L11.400 11.500H2.800Z" fill="#f2f9fe"/><path d="M2.300 11.300H5.500" stroke="#2590d2" stroke-width="1.100"/><path d="M7.600 9L5.200 11.800L7.600 14.600M12.300 9L14.700 11.800L12.300 14.600" fill="none" stroke="#1878c4" stroke-width="1.800"/><path d="M10.700 8.600L9.200 15" stroke="#1878c4" stroke-width="1.500"/></svg>
<span class="t" style="left:1119.5px;top:805.69px;font-size:11px;line-height:11px;color:#000;letter-spacing:-0.299px;">MouseLeave</span>
<svg class="i" style="left:1192px;top:802.5px;" width="16" height="15.5" viewBox="0 0 16 16"><path d="M4.300 1.200H13.800C15.600 1.200 15.600 4.200 13.800 4.200H12.800L11.600 10" fill="none" stroke="#2590d2" stroke-width="1.300"/><path d="M4.600 1.200C3.300 1.200 3.200 2.800 3.600 3.600L2.300 11.300H.9C.2 13 1 14.600 2.400 14.600H5.500" fill="none" stroke="#2590d2" stroke-width="1.300"/><path d="M4.500 1.800H13L11.400 11.500H2.800Z" fill="#f2f9fe"/><path d="M2.300 11.300H5.500" stroke="#2590d2" stroke-width="1.100"/><path d="M7.600 9L5.200 11.800L7.600 14.600M12.300 9L14.700 11.800L12.300 14.600" fill="none" stroke="#1878c4" stroke-width="1.800"/><path d="M10.700 8.600L9.200 15" stroke="#1878c4" stroke-width="1.500"/></svg>
<span class="t" style="left:1213.5px;top:805.69px;font-size:11px;line-height:11px;color:#000;letter-spacing:-0.039px;">ContextMenu</span>
<div style="left:623px;top:799px;width:1px;height:24px;background:#e6e6e6"></div>
<div style="left:686px;top:799px;width:1px;height:24px;background:#e6e6e6"></div>
<div style="left:738px;top:799px;width:1px;height:24px;background:#e6e6e6"></div>
<div style="left:817px;top:799px;width:1px;height:24px;background:#e6e6e6"></div>
<div style="left:907px;top:799px;width:1px;height:24px;background:#e6e6e6"></div>
<div style="left:999px;top:799px;width:1px;height:24px;background:#e6e6e6"></div>
<div style="left:1090px;top:799px;width:1px;height:24px;background:#e6e6e6"></div>
<div style="left:1184px;top:799px;width:1px;height:24px;background:#e6e6e6"></div>
<div style="left:1283px;top:799px;width:1px;height:24px;background:#e6e6e6"></div>
</div></body></html>
